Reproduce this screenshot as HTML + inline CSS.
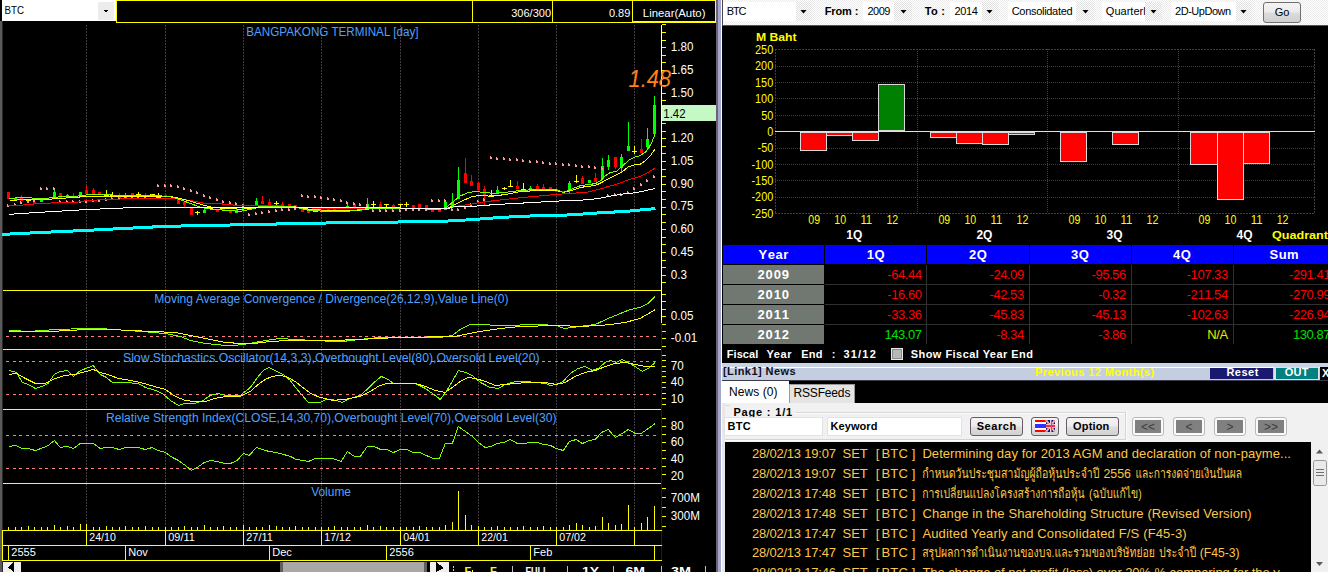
<!DOCTYPE html>
<html lang="th">
<head>
<meta charset="utf-8">
<title>BTC - BANGPAKONG TERMINAL</title>
<style>
html,body{margin:0;padding:0;background:#000;}
body{width:1328px;height:572px;overflow:hidden;position:relative;
 font-family:"Liberation Sans","Loma","Noto Sans Thai","Tahoma",Arial,sans-serif;}
#app{position:absolute;left:0;top:0;width:1328px;height:572px;overflow:hidden;background:#000;}
.t{position:absolute;white-space:nowrap;margin:0;padding:0;}
.b{position:absolute;margin:0;padding:0;display:block;}
.th{font-size:13px;}
table.grid{position:absolute;border-collapse:collapse;table-layout:fixed;font-size:13px;}
table.grid th,table.grid td{height:19px;padding:0;border:1px solid #000;box-sizing:border-box;line-height:15px;vertical-align:top;overflow:hidden;white-space:nowrap;font-kerning:none;}
table.grid tr{height:20px;}
table.grid tr.hd{height:20px;}
table.grid tr.hd th{background:#0000ff;color:#fff;font-weight:bold;text-align:center;letter-spacing:0.5px;height:20px;line-height:15px;padding-top:2px;}
table.grid th.yr{background:#717871;color:#fff;font-weight:bold;text-align:center;letter-spacing:0.8px;padding-top:2px;}
table.grid td{background:#000;text-align:right;padding:2px 5px 0 0;letter-spacing:-0.45px;border-color:#303030;}
td.neg{color:#ff0000;} td.pos{color:#00e000;} td.na{color:#e8e800;}
button{outline:none;}
</style>
</head>
<body>
<div id="app">
<svg id="tech" width="722" height="572" viewBox="0 0 722 572" shape-rendering="crispEdges" font-family="'Liberation Sans', Arial, sans-serif" style="position:absolute;left:0;top:0">
<rect x="0" y="0" width="722" height="572" fill="#000"/>
<rect x="0" y="21" width="2" height="551" fill="#5a5a5a"/>
<rect x="2" y="21" width="1" height="551" fill="#2a2a2a"/>
<line x1="86.5" y1="25" x2="86.5" y2="530" stroke="#443c44" stroke-width="1" stroke-dasharray="2 1"/>
<line x1="165.5" y1="25" x2="165.5" y2="530" stroke="#443c44" stroke-width="1" stroke-dasharray="2 1"/>
<line x1="243.5" y1="25" x2="243.5" y2="530" stroke="#443c44" stroke-width="1" stroke-dasharray="2 1"/>
<line x1="321.5" y1="25" x2="321.5" y2="530" stroke="#443c44" stroke-width="1" stroke-dasharray="2 1"/>
<line x1="400.5" y1="25" x2="400.5" y2="530" stroke="#443c44" stroke-width="1" stroke-dasharray="2 1"/>
<line x1="478.5" y1="25" x2="478.5" y2="530" stroke="#443c44" stroke-width="1" stroke-dasharray="2 1"/>
<line x1="556.5" y1="25" x2="556.5" y2="530" stroke="#443c44" stroke-width="1" stroke-dasharray="2 1"/>
<line x1="634.5" y1="25" x2="634.5" y2="530" stroke="#443c44" stroke-width="1" stroke-dasharray="2 1"/>
<rect x="3" y="290" width="658" height="1" fill="#ffff00"/>
<rect x="3" y="349" width="658" height="1" fill="#ffff00"/>
<rect x="3" y="409" width="658" height="1" fill="#ffff00"/>
<rect x="3" y="483" width="658" height="1" fill="#ffff00"/>
<rect x="2" y="0" width="114" height="21" fill="#fff"/>
<rect x="98" y="2" width="16" height="18" fill="#ececec"/>
<path d="M103.5 10 L108.5 10 L106 13 Z" fill="#000"/>
<text x="4.5" y="14.0" font-size="11" fill="#000" font-weight="normal" font-style="normal" text-anchor="start" textLength="19.5" lengthAdjust="spacingAndGlyphs">BTC</text>
<g fill="none" stroke="#ffff00" stroke-width="1">
<rect x="116.5" y="0.5" width="599" height="22"/>
<line x1="472.5" y1="0" x2="472.5" y2="22"/>
<line x1="552.5" y1="0" x2="552.5" y2="22"/>
<line x1="632.5" y1="0" x2="632.5" y2="22"/>
</g>
<rect x="633" y="21" width="82" height="1" fill="#e8e0e8"/>
<text x="551.0" y="16.6" font-size="11" fill="#fff" font-weight="normal" font-style="normal" text-anchor="end">306/300</text>
<text x="630.3" y="16.6" font-size="11" fill="#fff" font-weight="normal" font-style="normal" text-anchor="end">0.89</text>
<text x="642.8" y="17.0" font-size="11" fill="#fff" font-weight="normal" font-style="normal" text-anchor="start" textLength="62.7" lengthAdjust="spacingAndGlyphs">Linear(Auto)</text>
<text x="246.3" y="36.4" font-size="12" fill="#4fa0ff" font-weight="normal" font-style="normal" text-anchor="start" textLength="172.2" lengthAdjust="spacingAndGlyphs">BANGPAKONG TERMINAL [day]</text>
<text x="154.2" y="302.8" font-size="12" fill="#4fa0ff" font-weight="normal" font-style="normal" text-anchor="start" textLength="354.3" lengthAdjust="spacingAndGlyphs">Moving Average Convergence / Divergence(26,12,9),Value Line(0)</text>
<text x="123.0" y="361.6" font-size="12" fill="#4fa0ff" font-weight="normal" font-style="normal" text-anchor="start" textLength="416.5" lengthAdjust="spacingAndGlyphs">Slow Stochastics Oscillator(14,3,3),Overbought Level(80),Oversold Level(20)</text>
<text x="106.0" y="421.8" font-size="12" fill="#4fa0ff" font-weight="normal" font-style="normal" text-anchor="start" textLength="450.5" lengthAdjust="spacingAndGlyphs">Relative Strength Index(CLOSE,14,30,70),Overbought Level(70),Oversold Level(30)</text>
<text x="311.2" y="496.0" font-size="12" fill="#4fa0ff" font-weight="normal" font-style="normal" text-anchor="start" textLength="39.8" lengthAdjust="spacingAndGlyphs">Volume</text>
<line x1="6.3" y1="336.5" x2="656" y2="336.5" stroke="#ff8080" stroke-width="1" stroke-dasharray="3 3.529"/>
<line x1="6.3" y1="361.5" x2="656" y2="361.5" stroke="#ff8080" stroke-width="1" stroke-dasharray="3 3.529"/>
<line x1="6.3" y1="394.5" x2="656" y2="394.5" stroke="#ff8080" stroke-width="1" stroke-dasharray="3 3.529"/>
<line x1="6.3" y1="435.5" x2="656" y2="435.5" stroke="#ff8080" stroke-width="1" stroke-dasharray="3 3.529"/>
<line x1="6.3" y1="468.5" x2="656" y2="468.5" stroke="#ff8080" stroke-width="1" stroke-dasharray="3 3.529"/>
<rect x="7" y="192" width="3" height="7" fill="#ff0000"/>
<rect x="14" y="198" width="3" height="3" fill="#00ff00"/>
<rect x="20" y="198" width="3" height="3" fill="#ff0000"/>
<rect x="21" y="195" width="1" height="3" fill="#ff0000"/>
<rect x="28" y="199" width="1" height="0" fill="#ffff00"/>
<rect x="26" y="199" width="5" height="2" fill="#ffff00"/>
<rect x="33" y="202" width="3" height="2" fill="#ff0000"/>
<rect x="40" y="199" width="3" height="3" fill="#00ff00"/>
<rect x="46" y="198" width="3" height="2" fill="#00ff00"/>
<rect x="53" y="192" width="3" height="6" fill="#00ff00"/>
<rect x="54" y="190" width="1" height="2" fill="#00ff00"/>
<rect x="59" y="193" width="3" height="5" fill="#ff0000"/>
<rect x="66" y="195" width="3" height="3" fill="#00ff00"/>
<rect x="67" y="194" width="1" height="1" fill="#00ff00"/>
<rect x="72" y="196" width="3" height="2" fill="#ff0000"/>
<rect x="73" y="193" width="1" height="3" fill="#ff0000"/>
<rect x="79" y="192" width="3" height="5" fill="#00ff00"/>
<rect x="85" y="190" width="3" height="4" fill="#ff0000"/>
<rect x="86" y="186" width="1" height="4" fill="#ff0000"/>
<rect x="92" y="190" width="3" height="4" fill="#ff0000"/>
<rect x="93" y="188" width="1" height="2" fill="#ff0000"/>
<rect x="98" y="192" width="3" height="3" fill="#ff0000"/>
<rect x="106" y="190" width="1" height="4" fill="#ffff00"/>
<rect x="104" y="194" width="5" height="2" fill="#ffff00"/>
<rect x="112" y="192" width="1" height="3" fill="#ffff00"/>
<rect x="110" y="195" width="5" height="2" fill="#ffff00"/>
<rect x="118" y="195" width="3" height="3" fill="#ff0000"/>
<rect x="119" y="193" width="1" height="2" fill="#ff0000"/>
<rect x="124" y="195" width="3" height="3" fill="#00ff00"/>
<rect x="125" y="193" width="1" height="2" fill="#00ff00"/>
<rect x="131" y="193" width="3" height="3" fill="#ff0000"/>
<rect x="138" y="192" width="1" height="2" fill="#ffff00"/>
<rect x="136" y="194" width="5" height="2" fill="#ffff00"/>
<rect x="144" y="195" width="3" height="2" fill="#ff0000"/>
<rect x="145" y="193" width="1" height="2" fill="#ff0000"/>
<rect x="150" y="194" width="5" height="1" fill="#ffff00"/>
<rect x="152" y="194" width="1" height="2" fill="#ffff00"/>
<rect x="158" y="193" width="1" height="3" fill="#ffff00"/>
<rect x="156" y="196" width="5" height="2" fill="#ffff00"/>
<rect x="164" y="195" width="3" height="2" fill="#ff0000"/>
<rect x="177" y="198" width="3" height="6" fill="#ff0000"/>
<rect x="183" y="202" width="3" height="3" fill="#ff0000"/>
<rect x="184" y="205" width="1" height="3" fill="#ff0000"/>
<rect x="190" y="207" width="3" height="8" fill="#ff0000"/>
<rect x="197" y="211" width="1" height="4" fill="#ffff00"/>
<rect x="195" y="212" width="5" height="1" fill="#ffff00"/>
<rect x="203" y="210" width="3" height="3" fill="#00ff00"/>
<rect x="204" y="207" width="1" height="3" fill="#00ff00"/>
<rect x="208" y="208" width="5" height="1" fill="#ffff00"/>
<rect x="210" y="208" width="1" height="2" fill="#ffff00"/>
<rect x="216" y="209" width="3" height="3" fill="#ff0000"/>
<rect x="222" y="209" width="3" height="2" fill="#ff0000"/>
<rect x="229" y="210" width="3" height="3" fill="#ff0000"/>
<rect x="235" y="210" width="3" height="3" fill="#00ff00"/>
<rect x="236" y="208" width="1" height="2" fill="#00ff00"/>
<rect x="242" y="207" width="3" height="2" fill="#00ff00"/>
<rect x="243" y="204" width="1" height="3" fill="#00ff00"/>
<rect x="243" y="209" width="1" height="2" fill="#00ff00"/>
<rect x="255" y="201" width="3" height="4" fill="#00ff00"/>
<rect x="256" y="198" width="1" height="3" fill="#00ff00"/>
<rect x="261" y="201" width="3" height="3" fill="#ff0000"/>
<rect x="262" y="196" width="1" height="5" fill="#ff0000"/>
<rect x="268" y="202" width="3" height="3" fill="#ff0000"/>
<rect x="269" y="199" width="1" height="3" fill="#ff0000"/>
<rect x="276" y="201" width="1" height="4" fill="#ffff00"/>
<rect x="274" y="203" width="5" height="1" fill="#ffff00"/>
<rect x="281" y="204" width="3" height="2" fill="#ff0000"/>
<rect x="282" y="202" width="1" height="2" fill="#ff0000"/>
<rect x="288" y="204" width="3" height="2" fill="#ff0000"/>
<rect x="294" y="205" width="3" height="3" fill="#ff0000"/>
<rect x="301" y="207" width="3" height="5" fill="#ff0000"/>
<rect x="307" y="210" width="3" height="3" fill="#ff0000"/>
<rect x="315" y="208" width="1" height="2" fill="#ffff00"/>
<rect x="313" y="210" width="5" height="2" fill="#ffff00"/>
<rect x="320" y="210" width="3" height="2" fill="#ff0000"/>
<rect x="327" y="208" width="3" height="2" fill="#ff0000"/>
<rect x="333" y="208" width="3" height="2" fill="#ff0000"/>
<rect x="346" y="206" width="3" height="3" fill="#00ff00"/>
<rect x="347" y="204" width="1" height="2" fill="#00ff00"/>
<rect x="353" y="204" width="3" height="4" fill="#ff0000"/>
<rect x="359" y="209" width="3" height="2" fill="#00ff00"/>
<rect x="366" y="204" width="3" height="4" fill="#00ff00"/>
<rect x="367" y="198" width="1" height="6" fill="#00ff00"/>
<rect x="373" y="201" width="1" height="6" fill="#ffff00"/>
<rect x="371" y="204" width="5" height="1" fill="#ffff00"/>
<rect x="379" y="204" width="3" height="4" fill="#ff0000"/>
<rect x="380" y="202" width="1" height="2" fill="#ff0000"/>
<rect x="384" y="204" width="5" height="1" fill="#ffff00"/>
<rect x="386" y="204" width="1" height="4" fill="#ffff00"/>
<rect x="392" y="205" width="3" height="3" fill="#ff0000"/>
<rect x="393" y="204" width="1" height="1" fill="#ff0000"/>
<rect x="398" y="204" width="5" height="1" fill="#ffff00"/>
<rect x="400" y="204" width="1" height="4" fill="#ffff00"/>
<rect x="406" y="202" width="1" height="5" fill="#ffff00"/>
<rect x="404" y="204" width="5" height="1" fill="#ffff00"/>
<rect x="412" y="205" width="3" height="4" fill="#ff0000"/>
<rect x="418" y="204" width="3" height="5" fill="#ff0000"/>
<rect x="419" y="204" width="1" height="0" fill="#ff0000"/>
<rect x="425" y="205" width="3" height="4" fill="#ff0000"/>
<rect x="431" y="210" width="3" height="2" fill="#ff0000"/>
<rect x="438" y="209" width="3" height="3" fill="#ff0000"/>
<rect x="444" y="202" width="3" height="8" fill="#00ff00"/>
<rect x="451" y="202" width="3" height="5" fill="#00ff00"/>
<rect x="452" y="193" width="1" height="9" fill="#00ff00"/>
<rect x="457" y="180" width="3" height="19" fill="#00ff00"/>
<rect x="458" y="167" width="1" height="13" fill="#00ff00"/>
<rect x="464" y="173" width="3" height="10" fill="#ff0000"/>
<rect x="465" y="158" width="1" height="15" fill="#ff0000"/>
<rect x="470" y="181" width="3" height="5" fill="#ff0000"/>
<rect x="471" y="175" width="1" height="6" fill="#ff0000"/>
<rect x="477" y="183" width="3" height="7" fill="#ff0000"/>
<rect x="478" y="182" width="1" height="1" fill="#ff0000"/>
<rect x="478" y="190" width="1" height="2" fill="#ff0000"/>
<rect x="483" y="189" width="3" height="7" fill="#ff0000"/>
<rect x="484" y="186" width="1" height="3" fill="#ff0000"/>
<rect x="484" y="196" width="1" height="9" fill="#ff0000"/>
<rect x="491" y="190" width="1" height="5" fill="#ffff00"/>
<rect x="489" y="195" width="5" height="2" fill="#ffff00"/>
<rect x="496" y="190" width="3" height="3" fill="#00ff00"/>
<rect x="497" y="186" width="1" height="4" fill="#00ff00"/>
<rect x="504" y="187" width="1" height="3" fill="#ffff00"/>
<rect x="502" y="188" width="5" height="1" fill="#ffff00"/>
<rect x="510" y="180" width="1" height="7" fill="#ffff00"/>
<rect x="508" y="186" width="5" height="1" fill="#ffff00"/>
<rect x="516" y="186" width="3" height="3" fill="#ff0000"/>
<rect x="517" y="181" width="1" height="5" fill="#ff0000"/>
<rect x="523" y="183" width="1" height="6" fill="#ffff00"/>
<rect x="521" y="189" width="5" height="2" fill="#ffff00"/>
<rect x="529" y="188" width="3" height="3" fill="#00ff00"/>
<rect x="530" y="186" width="1" height="2" fill="#00ff00"/>
<rect x="536" y="186" width="3" height="3" fill="#ff0000"/>
<rect x="537" y="184" width="1" height="2" fill="#ff0000"/>
<rect x="542" y="187" width="3" height="2" fill="#ff0000"/>
<rect x="543" y="184" width="1" height="3" fill="#ff0000"/>
<rect x="549" y="187" width="3" height="2" fill="#ff0000"/>
<rect x="555" y="189" width="3" height="3" fill="#ff0000"/>
<rect x="562" y="191" width="3" height="3" fill="#ff0000"/>
<rect x="568" y="183" width="3" height="7" fill="#00ff00"/>
<rect x="569" y="181" width="1" height="2" fill="#00ff00"/>
<rect x="569" y="190" width="1" height="3" fill="#00ff00"/>
<rect x="576" y="175" width="1" height="8" fill="#ffff00"/>
<rect x="574" y="181" width="5" height="1" fill="#ffff00"/>
<rect x="581" y="178" width="3" height="6" fill="#ff0000"/>
<rect x="582" y="176" width="1" height="2" fill="#ff0000"/>
<rect x="588" y="180" width="3" height="3" fill="#00ff00"/>
<rect x="594" y="178" width="3" height="4" fill="#ff0000"/>
<rect x="595" y="173" width="1" height="5" fill="#ff0000"/>
<rect x="601" y="166" width="3" height="13" fill="#00ff00"/>
<rect x="602" y="158" width="1" height="8" fill="#00ff00"/>
<rect x="607" y="160" width="3" height="7" fill="#00ff00"/>
<rect x="608" y="155" width="1" height="5" fill="#00ff00"/>
<rect x="608" y="167" width="1" height="3" fill="#00ff00"/>
<rect x="614" y="157" width="3" height="10" fill="#ff0000"/>
<rect x="615" y="167" width="1" height="2" fill="#ff0000"/>
<rect x="620" y="157" width="3" height="11" fill="#00ff00"/>
<rect x="621" y="154" width="1" height="3" fill="#00ff00"/>
<rect x="621" y="168" width="1" height="4" fill="#00ff00"/>
<rect x="627" y="146" width="3" height="5" fill="#00ff00"/>
<rect x="628" y="122" width="1" height="24" fill="#00ff00"/>
<rect x="634" y="146" width="1" height="8" fill="#ffff00"/>
<rect x="632" y="151" width="5" height="1" fill="#ffff00"/>
<rect x="640" y="149" width="3" height="4" fill="#ff0000"/>
<rect x="641" y="139" width="1" height="10" fill="#ff0000"/>
<rect x="646" y="139" width="3" height="8" fill="#00ff00"/>
<rect x="647" y="128" width="1" height="11" fill="#00ff00"/>
<rect x="647" y="147" width="1" height="3" fill="#00ff00"/>
<rect x="653" y="105" width="3" height="29" fill="#00ff00"/>
<rect x="654" y="96" width="1" height="9" fill="#00ff00"/>
<rect x="7" y="205" width="2" height="2" fill="#ff9898"/>
<rect x="7" y="204" width="1" height="1" fill="#ff9898"/>
<rect x="14" y="204" width="2" height="2" fill="#ff9898"/>
<rect x="14" y="203" width="1" height="1" fill="#ff9898"/>
<rect x="20" y="202" width="2" height="2" fill="#ff9898"/>
<rect x="20" y="201" width="1" height="1" fill="#ff9898"/>
<rect x="27" y="201" width="2" height="2" fill="#ff9898"/>
<rect x="27" y="200" width="1" height="1" fill="#ff9898"/>
<rect x="33" y="200" width="2" height="2" fill="#ff9898"/>
<rect x="33" y="199" width="1" height="1" fill="#ff9898"/>
<rect x="40" y="188" width="2" height="2" fill="#ff9898"/>
<rect x="40" y="187" width="1" height="1" fill="#ff9898"/>
<rect x="46" y="188" width="2" height="2" fill="#ff9898"/>
<rect x="46" y="187" width="1" height="1" fill="#ff9898"/>
<rect x="53" y="188" width="2" height="2" fill="#ff9898"/>
<rect x="53" y="187" width="1" height="1" fill="#ff9898"/>
<rect x="59" y="201" width="2" height="2" fill="#ff9898"/>
<rect x="59" y="200" width="1" height="1" fill="#ff9898"/>
<rect x="66" y="201" width="2" height="2" fill="#ff9898"/>
<rect x="66" y="200" width="1" height="1" fill="#ff9898"/>
<rect x="72" y="201" width="2" height="2" fill="#ff9898"/>
<rect x="72" y="200" width="1" height="1" fill="#ff9898"/>
<rect x="79" y="201" width="2" height="2" fill="#ff9898"/>
<rect x="79" y="200" width="1" height="1" fill="#ff9898"/>
<rect x="85" y="201" width="2" height="2" fill="#ff9898"/>
<rect x="85" y="200" width="1" height="1" fill="#ff9898"/>
<rect x="92" y="200" width="2" height="2" fill="#ff9898"/>
<rect x="92" y="199" width="1" height="1" fill="#ff9898"/>
<rect x="98" y="200" width="2" height="2" fill="#ff9898"/>
<rect x="98" y="199" width="1" height="1" fill="#ff9898"/>
<rect x="105" y="199" width="2" height="2" fill="#ff9898"/>
<rect x="105" y="198" width="1" height="1" fill="#ff9898"/>
<rect x="111" y="198" width="2" height="2" fill="#ff9898"/>
<rect x="111" y="197" width="1" height="1" fill="#ff9898"/>
<rect x="118" y="198" width="2" height="2" fill="#ff9898"/>
<rect x="118" y="197" width="1" height="1" fill="#ff9898"/>
<rect x="124" y="197" width="2" height="2" fill="#ff9898"/>
<rect x="124" y="196" width="1" height="1" fill="#ff9898"/>
<rect x="131" y="197" width="2" height="2" fill="#ff9898"/>
<rect x="131" y="196" width="1" height="1" fill="#ff9898"/>
<rect x="137" y="196" width="2" height="2" fill="#ff9898"/>
<rect x="137" y="195" width="1" height="1" fill="#ff9898"/>
<rect x="144" y="196" width="2" height="2" fill="#ff9898"/>
<rect x="144" y="195" width="1" height="1" fill="#ff9898"/>
<rect x="151" y="195" width="2" height="2" fill="#ff9898"/>
<rect x="151" y="194" width="1" height="1" fill="#ff9898"/>
<rect x="157" y="185" width="2" height="2" fill="#ff9898"/>
<rect x="157" y="184" width="1" height="1" fill="#ff9898"/>
<rect x="164" y="185" width="2" height="2" fill="#ff9898"/>
<rect x="164" y="184" width="1" height="1" fill="#ff9898"/>
<rect x="170" y="185" width="2" height="2" fill="#ff9898"/>
<rect x="170" y="184" width="1" height="1" fill="#ff9898"/>
<rect x="177" y="186" width="2" height="2" fill="#ff9898"/>
<rect x="177" y="185" width="1" height="1" fill="#ff9898"/>
<rect x="183" y="188" width="2" height="2" fill="#ff9898"/>
<rect x="183" y="187" width="1" height="1" fill="#ff9898"/>
<rect x="190" y="190" width="2" height="2" fill="#ff9898"/>
<rect x="190" y="189" width="1" height="1" fill="#ff9898"/>
<rect x="196" y="192" width="2" height="2" fill="#ff9898"/>
<rect x="196" y="191" width="1" height="1" fill="#ff9898"/>
<rect x="203" y="195" width="2" height="2" fill="#ff9898"/>
<rect x="203" y="194" width="1" height="1" fill="#ff9898"/>
<rect x="209" y="197" width="2" height="2" fill="#ff9898"/>
<rect x="209" y="196" width="1" height="1" fill="#ff9898"/>
<rect x="216" y="199" width="2" height="2" fill="#ff9898"/>
<rect x="216" y="198" width="1" height="1" fill="#ff9898"/>
<rect x="222" y="201" width="2" height="2" fill="#ff9898"/>
<rect x="222" y="200" width="1" height="1" fill="#ff9898"/>
<rect x="229" y="202" width="2" height="2" fill="#ff9898"/>
<rect x="229" y="201" width="1" height="1" fill="#ff9898"/>
<rect x="235" y="203" width="2" height="2" fill="#ff9898"/>
<rect x="235" y="202" width="1" height="1" fill="#ff9898"/>
<rect x="242" y="205" width="2" height="2" fill="#ff9898"/>
<rect x="242" y="204" width="1" height="1" fill="#ff9898"/>
<rect x="248" y="214" width="2" height="2" fill="#ff9898"/>
<rect x="248" y="213" width="1" height="1" fill="#ff9898"/>
<rect x="255" y="213" width="2" height="2" fill="#ff9898"/>
<rect x="255" y="212" width="1" height="1" fill="#ff9898"/>
<rect x="261" y="212" width="2" height="2" fill="#ff9898"/>
<rect x="261" y="211" width="1" height="1" fill="#ff9898"/>
<rect x="268" y="211" width="2" height="2" fill="#ff9898"/>
<rect x="268" y="210" width="1" height="1" fill="#ff9898"/>
<rect x="275" y="210" width="2" height="2" fill="#ff9898"/>
<rect x="275" y="209" width="1" height="1" fill="#ff9898"/>
<rect x="281" y="209" width="2" height="2" fill="#ff9898"/>
<rect x="281" y="208" width="1" height="1" fill="#ff9898"/>
<rect x="288" y="209" width="2" height="2" fill="#ff9898"/>
<rect x="288" y="208" width="1" height="1" fill="#ff9898"/>
<rect x="294" y="208" width="2" height="2" fill="#ff9898"/>
<rect x="294" y="207" width="1" height="1" fill="#ff9898"/>
<rect x="301" y="195" width="2" height="2" fill="#ff9898"/>
<rect x="301" y="194" width="1" height="1" fill="#ff9898"/>
<rect x="307" y="196" width="2" height="2" fill="#ff9898"/>
<rect x="307" y="195" width="1" height="1" fill="#ff9898"/>
<rect x="314" y="196" width="2" height="2" fill="#ff9898"/>
<rect x="314" y="195" width="1" height="1" fill="#ff9898"/>
<rect x="320" y="197" width="2" height="2" fill="#ff9898"/>
<rect x="320" y="196" width="1" height="1" fill="#ff9898"/>
<rect x="327" y="198" width="2" height="2" fill="#ff9898"/>
<rect x="327" y="197" width="1" height="1" fill="#ff9898"/>
<rect x="333" y="199" width="2" height="2" fill="#ff9898"/>
<rect x="333" y="198" width="1" height="1" fill="#ff9898"/>
<rect x="340" y="200" width="2" height="2" fill="#ff9898"/>
<rect x="340" y="199" width="1" height="1" fill="#ff9898"/>
<rect x="346" y="202" width="2" height="2" fill="#ff9898"/>
<rect x="346" y="201" width="1" height="1" fill="#ff9898"/>
<rect x="353" y="203" width="2" height="2" fill="#ff9898"/>
<rect x="353" y="202" width="1" height="1" fill="#ff9898"/>
<rect x="359" y="204" width="2" height="2" fill="#ff9898"/>
<rect x="359" y="203" width="1" height="1" fill="#ff9898"/>
<rect x="366" y="205" width="2" height="2" fill="#ff9898"/>
<rect x="366" y="204" width="1" height="1" fill="#ff9898"/>
<rect x="372" y="210" width="2" height="2" fill="#ff9898"/>
<rect x="372" y="209" width="1" height="1" fill="#ff9898"/>
<rect x="379" y="210" width="2" height="2" fill="#ff9898"/>
<rect x="379" y="209" width="1" height="1" fill="#ff9898"/>
<rect x="385" y="210" width="2" height="2" fill="#ff9898"/>
<rect x="385" y="209" width="1" height="1" fill="#ff9898"/>
<rect x="392" y="210" width="2" height="2" fill="#ff9898"/>
<rect x="392" y="209" width="1" height="1" fill="#ff9898"/>
<rect x="399" y="210" width="2" height="2" fill="#ff9898"/>
<rect x="399" y="209" width="1" height="1" fill="#ff9898"/>
<rect x="405" y="209" width="2" height="2" fill="#ff9898"/>
<rect x="405" y="208" width="1" height="1" fill="#ff9898"/>
<rect x="412" y="209" width="2" height="2" fill="#ff9898"/>
<rect x="412" y="208" width="1" height="1" fill="#ff9898"/>
<rect x="418" y="209" width="2" height="2" fill="#ff9898"/>
<rect x="418" y="208" width="1" height="1" fill="#ff9898"/>
<rect x="425" y="209" width="2" height="2" fill="#ff9898"/>
<rect x="425" y="208" width="1" height="1" fill="#ff9898"/>
<rect x="431" y="200" width="2" height="2" fill="#ff9898"/>
<rect x="431" y="199" width="1" height="1" fill="#ff9898"/>
<rect x="438" y="200" width="2" height="2" fill="#ff9898"/>
<rect x="438" y="199" width="1" height="1" fill="#ff9898"/>
<rect x="444" y="200" width="2" height="2" fill="#ff9898"/>
<rect x="444" y="199" width="1" height="1" fill="#ff9898"/>
<rect x="451" y="209" width="2" height="2" fill="#ff9898"/>
<rect x="451" y="208" width="1" height="1" fill="#ff9898"/>
<rect x="457" y="209" width="2" height="2" fill="#ff9898"/>
<rect x="457" y="208" width="1" height="1" fill="#ff9898"/>
<rect x="464" y="207" width="2" height="2" fill="#ff9898"/>
<rect x="464" y="206" width="1" height="1" fill="#ff9898"/>
<rect x="470" y="204" width="2" height="2" fill="#ff9898"/>
<rect x="470" y="203" width="1" height="1" fill="#ff9898"/>
<rect x="477" y="201" width="2" height="2" fill="#ff9898"/>
<rect x="477" y="200" width="1" height="1" fill="#ff9898"/>
<rect x="483" y="199" width="2" height="2" fill="#ff9898"/>
<rect x="483" y="198" width="1" height="1" fill="#ff9898"/>
<rect x="490" y="157" width="2" height="2" fill="#ff9898"/>
<rect x="490" y="156" width="1" height="1" fill="#ff9898"/>
<rect x="496" y="158" width="2" height="2" fill="#ff9898"/>
<rect x="496" y="157" width="1" height="1" fill="#ff9898"/>
<rect x="503" y="158" width="2" height="2" fill="#ff9898"/>
<rect x="503" y="157" width="1" height="1" fill="#ff9898"/>
<rect x="509" y="159" width="2" height="2" fill="#ff9898"/>
<rect x="509" y="158" width="1" height="1" fill="#ff9898"/>
<rect x="516" y="159" width="2" height="2" fill="#ff9898"/>
<rect x="516" y="158" width="1" height="1" fill="#ff9898"/>
<rect x="522" y="160" width="2" height="2" fill="#ff9898"/>
<rect x="522" y="159" width="1" height="1" fill="#ff9898"/>
<rect x="529" y="161" width="2" height="2" fill="#ff9898"/>
<rect x="529" y="160" width="1" height="1" fill="#ff9898"/>
<rect x="536" y="161" width="2" height="2" fill="#ff9898"/>
<rect x="536" y="160" width="1" height="1" fill="#ff9898"/>
<rect x="542" y="162" width="2" height="2" fill="#ff9898"/>
<rect x="542" y="161" width="1" height="1" fill="#ff9898"/>
<rect x="549" y="163" width="2" height="2" fill="#ff9898"/>
<rect x="549" y="162" width="1" height="1" fill="#ff9898"/>
<rect x="555" y="163" width="2" height="2" fill="#ff9898"/>
<rect x="555" y="162" width="1" height="1" fill="#ff9898"/>
<rect x="562" y="164" width="2" height="2" fill="#ff9898"/>
<rect x="562" y="163" width="1" height="1" fill="#ff9898"/>
<rect x="568" y="164" width="2" height="2" fill="#ff9898"/>
<rect x="568" y="163" width="1" height="1" fill="#ff9898"/>
<rect x="575" y="165" width="2" height="2" fill="#ff9898"/>
<rect x="575" y="164" width="1" height="1" fill="#ff9898"/>
<rect x="581" y="166" width="2" height="2" fill="#ff9898"/>
<rect x="581" y="165" width="1" height="1" fill="#ff9898"/>
<rect x="588" y="166" width="2" height="2" fill="#ff9898"/>
<rect x="588" y="165" width="1" height="1" fill="#ff9898"/>
<rect x="594" y="167" width="2" height="2" fill="#ff9898"/>
<rect x="594" y="166" width="1" height="1" fill="#ff9898"/>
<rect x="601" y="168" width="2" height="2" fill="#ff9898"/>
<rect x="601" y="167" width="1" height="1" fill="#ff9898"/>
<rect x="607" y="195" width="2" height="2" fill="#ff9898"/>
<rect x="607" y="194" width="1" height="1" fill="#ff9898"/>
<rect x="614" y="194" width="2" height="2" fill="#ff9898"/>
<rect x="614" y="193" width="1" height="1" fill="#ff9898"/>
<rect x="620" y="194" width="2" height="2" fill="#ff9898"/>
<rect x="620" y="193" width="1" height="1" fill="#ff9898"/>
<rect x="627" y="192" width="2" height="2" fill="#ff9898"/>
<rect x="627" y="191" width="1" height="1" fill="#ff9898"/>
<rect x="633" y="188" width="2" height="2" fill="#ff9898"/>
<rect x="633" y="187" width="1" height="1" fill="#ff9898"/>
<rect x="640" y="184" width="2" height="2" fill="#ff9898"/>
<rect x="640" y="183" width="1" height="1" fill="#ff9898"/>
<rect x="646" y="180" width="2" height="2" fill="#ff9898"/>
<rect x="646" y="179" width="1" height="1" fill="#ff9898"/>
<rect x="653" y="176" width="2" height="2" fill="#ff9898"/>
<rect x="653" y="175" width="1" height="1" fill="#ff9898"/>
<polyline points="2.3,234.4 40.3,232.5 86.3,230.4 125.3,228.4 166.3,226.3 210.3,225.4 260.3,224.4 310.3,223.2 360.3,222.6 410.3,221.8 440.3,221.4 458.3,220.5 477.3,219.2 487.3,218.4 513.3,216.7 537.3,215.7 560.3,215.4 580.3,214.2 593.3,213.2 625.3,211.4 655.5,208.6" fill="none" stroke="#00ffff" stroke-width="3"/>
<polyline points="8.3,205.6 18.3,205.4 40.3,203.5 60.3,202.6 75.3,202.5 86.3,200.6 100.3,199.8 125.3,198.8 166.3,198.4 178.3,198.5 190.3,200.5 205.3,203.4 220.3,203.8 235.3,205.2 250.3,205.3 268.3,205.4 285.3,206.2 300.3,207.5 321.3,208.4 360.3,208.6 400.3,208.2 440.3,208.4 452.3,207.5 460.3,205.5 470.3,204.4 480.3,202.4 486.3,201.6 520.3,197.7 556.3,194.4 580.3,192.7 586.3,192.4 594.3,190.4 602.4,188.5 608.3,186.4 616.4,184.3 622.3,182.2 629.3,179.4 636.3,177.6 641.5,175.7 647.1,173.1 651.3,170.3 654.8,168.3" fill="none" stroke="#ff0000" stroke-width="1"/>
<polyline points="10.3,200.2 30.3,199.6 50.3,199.2 56.3,198.4 75.3,197.6 82.3,196.6 100.3,196.4 125.3,196.2 150.3,196.6 166.3,196.4 172.3,196.8 180.3,198.5 190.3,201.2 200.3,204.2 212.3,207.4 225.3,208.4 240.3,209.2 252.3,208.6 260.3,207.2 270.3,206.4 290.3,206.2 300.3,207.6 310.3,209.4 324.3,210.2 345.3,210.8 356.3,210.4 372.3,208.6 440.3,208.8 447.3,208.4 455.3,204.5 463.3,200.4 472.3,196.5 480.3,195.4 490.3,196.2 505.3,194.6 520.3,191.6 540.3,190.4 556.3,190.4 563.3,192.3 572.3,190.4 580.3,187.4 588.4,186.4 595.4,185.4 601.3,182.7 608.3,178.7 615.3,175.2 622.3,171.7 628.3,166.9 634.5,164.8 640.1,164.4 645.3,160.6 650.3,155.7 654.8,149.4" fill="none" stroke="#ffff00" stroke-width="1"/>
<polyline points="9.3,198.2 14.3,198.2 18.3,197.2 45.3,198.8 52.3,197.2 75.3,196.4 82.3,195.2 98.3,194.4 125.3,195.6 160.3,195.8 172.3,197.2 180.3,199.8 190.3,203.4 200.3,207.2 212.3,209.4 225.3,210.2 240.3,211.4 250.3,209.4 258.3,206.8 268.3,206.4 288.3,206.2 298.3,207.8 308.3,210.2 322.3,211.2 345.3,211.6 354.3,210.4 366.3,208.8 380.3,208.4 440.3,209.2 446.3,207.4 452.3,202.5 459.3,196.5 467.3,192.8 476.3,191.4 484.3,192.6 495.3,193.4 505.3,192.4 520.3,190.4 540.3,189.4 556.3,189.6 563.3,192.4 570.3,189.6 580.3,185.7 588.4,184.6 595.4,183.6 601.3,180.1 605.2,175.9 610.3,172.4 616.4,171.4 622.3,166.2 628.3,160.6 634.5,157.1 640.1,155.7 645.3,152.2 648.5,148.4 652.3,141.4 654.8,134.4" fill="none" stroke="#80ff00" stroke-width="1"/>
<polyline points="9.3,214.3 40.3,212.3 86.3,209.6 125.3,207.9 166.3,207.4 200.3,207.4 326.3,207.4 436.3,208.3 448.3,208.4 455.3,206.4 475.3,206.4 480.3,205.4 494.3,204.8 500.3,204.1 514.3,203.8 520.3,203.1 527.3,202.9 532.3,202.2 546.3,201.9 552.3,201.2 573.3,200.6 586.3,199.8 599.3,198.4 608.3,196.4 622.3,194.1 636.3,192.7 645.7,190.6 654.8,188.5" fill="none" stroke="#ffffff" stroke-width="1"/>
<rect x="661" y="25" width="1" height="295" fill="#ffffff"/>
<rect x="661" y="320" width="1" height="3" fill="#ffff00"/>
<rect x="661" y="323" width="1" height="238" fill="#0000ff"/>
<rect x="662" y="24" width="4" height="1" fill="#ffff00"/>
<rect x="662" y="32" width="4" height="1" fill="#ffff00"/>
<rect x="662" y="40" width="4" height="1" fill="#ffff00"/>
<rect x="662" y="47" width="4" height="1" fill="#ffff00"/>
<rect x="662" y="55" width="4" height="1" fill="#ffff00"/>
<rect x="662" y="62" width="4" height="1" fill="#ffff00"/>
<rect x="662" y="70" width="4" height="1" fill="#ffff00"/>
<rect x="662" y="78" width="4" height="1" fill="#ffff00"/>
<rect x="662" y="85" width="4" height="1" fill="#ffff00"/>
<rect x="662" y="93" width="4" height="1" fill="#ffff00"/>
<rect x="662" y="100" width="4" height="1" fill="#ffff00"/>
<rect x="662" y="108" width="4" height="1" fill="#ffff00"/>
<rect x="662" y="115" width="4" height="1" fill="#ffff00"/>
<rect x="662" y="123" width="4" height="1" fill="#ffff00"/>
<rect x="662" y="131" width="4" height="1" fill="#ffff00"/>
<rect x="662" y="138" width="4" height="1" fill="#ffff00"/>
<rect x="662" y="146" width="4" height="1" fill="#ffff00"/>
<rect x="662" y="153" width="4" height="1" fill="#ffff00"/>
<rect x="662" y="161" width="4" height="1" fill="#ffff00"/>
<rect x="662" y="169" width="4" height="1" fill="#ffff00"/>
<rect x="662" y="176" width="4" height="1" fill="#ffff00"/>
<rect x="662" y="184" width="4" height="1" fill="#ffff00"/>
<rect x="662" y="191" width="4" height="1" fill="#ffff00"/>
<rect x="662" y="199" width="4" height="1" fill="#ffff00"/>
<rect x="662" y="207" width="4" height="1" fill="#ffff00"/>
<rect x="662" y="214" width="4" height="1" fill="#ffff00"/>
<rect x="662" y="222" width="4" height="1" fill="#ffff00"/>
<rect x="662" y="229" width="4" height="1" fill="#ffff00"/>
<rect x="662" y="237" width="4" height="1" fill="#ffff00"/>
<rect x="662" y="244" width="4" height="1" fill="#ffff00"/>
<rect x="662" y="252" width="4" height="1" fill="#ffff00"/>
<rect x="662" y="260" width="4" height="1" fill="#ffff00"/>
<rect x="662" y="267" width="4" height="1" fill="#ffff00"/>
<rect x="662" y="275" width="4" height="1" fill="#ffff00"/>
<rect x="662" y="282" width="4" height="1" fill="#ffff00"/>
<rect x="662" y="294" width="4" height="1" fill="#ffff00"/>
<rect x="662" y="301" width="4" height="1" fill="#ffff00"/>
<rect x="662" y="309" width="4" height="1" fill="#ffff00"/>
<rect x="662" y="316" width="4" height="1" fill="#ffff00"/>
<rect x="662" y="324" width="4" height="1" fill="#ffff00"/>
<rect x="662" y="331" width="4" height="1" fill="#ffff00"/>
<rect x="662" y="338" width="4" height="1" fill="#ffff00"/>
<rect x="662" y="346" width="4" height="1" fill="#ffff00"/>
<rect x="662" y="355" width="4" height="1" fill="#ffff00"/>
<rect x="662" y="360" width="4" height="1" fill="#ffff00"/>
<rect x="662" y="366" width="4" height="1" fill="#ffff00"/>
<rect x="662" y="371" width="4" height="1" fill="#ffff00"/>
<rect x="662" y="376" width="4" height="1" fill="#ffff00"/>
<rect x="662" y="382" width="4" height="1" fill="#ffff00"/>
<rect x="662" y="387" width="4" height="1" fill="#ffff00"/>
<rect x="662" y="393" width="4" height="1" fill="#ffff00"/>
<rect x="662" y="398" width="4" height="1" fill="#ffff00"/>
<rect x="662" y="404" width="4" height="1" fill="#ffff00"/>
<rect x="662" y="418" width="4" height="1" fill="#ffff00"/>
<rect x="662" y="426" width="4" height="1" fill="#ffff00"/>
<rect x="662" y="434" width="4" height="1" fill="#ffff00"/>
<rect x="662" y="442" width="4" height="1" fill="#ffff00"/>
<rect x="662" y="450" width="4" height="1" fill="#ffff00"/>
<rect x="662" y="458" width="4" height="1" fill="#ffff00"/>
<rect x="662" y="466" width="4" height="1" fill="#ffff00"/>
<rect x="662" y="474" width="4" height="1" fill="#ffff00"/>
<rect x="662" y="488" width="4" height="1" fill="#ffff00"/>
<rect x="662" y="497" width="4" height="1" fill="#ffff00"/>
<rect x="662" y="507" width="4" height="1" fill="#ffff00"/>
<rect x="662" y="516" width="4" height="1" fill="#ffff00"/>
<rect x="662" y="526" width="4" height="1" fill="#ffff00"/>
<rect x="662" y="105" width="54" height="16" fill="#c4f8c4"/>
<text x="663.3" y="117.6" font-size="12.3" fill="#000" font-weight="normal" font-style="normal" text-anchor="start" textLength="22.3" lengthAdjust="spacingAndGlyphs">1.42</text>
<text x="628.5" y="87.0" font-size="24" fill="#ff8020" font-weight="normal" font-style="italic" text-anchor="start" textLength="42.5" lengthAdjust="spacingAndGlyphs">1.48</text>
<text x="670.8" y="51.0" font-size="12.3" fill="#fff" font-weight="normal" font-style="normal" text-anchor="start" textLength="22.6" lengthAdjust="spacingAndGlyphs">1.80</text>
<text x="670.8" y="73.8" font-size="12.3" fill="#fff" font-weight="normal" font-style="normal" text-anchor="start" textLength="22.6" lengthAdjust="spacingAndGlyphs">1.65</text>
<text x="670.8" y="96.5" font-size="12.3" fill="#fff" font-weight="normal" font-style="normal" text-anchor="start" textLength="22.6" lengthAdjust="spacingAndGlyphs">1.50</text>
<text x="670.8" y="142.0" font-size="12.3" fill="#fff" font-weight="normal" font-style="normal" text-anchor="start" textLength="22.6" lengthAdjust="spacingAndGlyphs">1.20</text>
<text x="670.8" y="164.8" font-size="12.3" fill="#fff" font-weight="normal" font-style="normal" text-anchor="start" textLength="22.6" lengthAdjust="spacingAndGlyphs">1.05</text>
<text x="670.8" y="187.6" font-size="12.3" fill="#fff" font-weight="normal" font-style="normal" text-anchor="start" textLength="22.6" lengthAdjust="spacingAndGlyphs">0.90</text>
<text x="670.8" y="210.3" font-size="12.3" fill="#fff" font-weight="normal" font-style="normal" text-anchor="start" textLength="22.6" lengthAdjust="spacingAndGlyphs">0.75</text>
<text x="670.8" y="233.1" font-size="12.3" fill="#fff" font-weight="normal" font-style="normal" text-anchor="start" textLength="22.6" lengthAdjust="spacingAndGlyphs">0.60</text>
<text x="670.8" y="255.8" font-size="12.3" fill="#fff" font-weight="normal" font-style="normal" text-anchor="start" textLength="22.6" lengthAdjust="spacingAndGlyphs">0.45</text>
<text x="670.8" y="278.6" font-size="12.3" fill="#fff" font-weight="normal" font-style="normal" text-anchor="start" textLength="16.2" lengthAdjust="spacingAndGlyphs">0.3</text>
<text x="670.8" y="319.8" font-size="12.3" fill="#fff" font-weight="normal" font-style="normal" text-anchor="start" textLength="22.6" lengthAdjust="spacingAndGlyphs">0.05</text>
<text x="670.8" y="342.3" font-size="12.3" fill="#fff" font-weight="normal" font-style="normal" text-anchor="start" textLength="26.5" lengthAdjust="spacingAndGlyphs">-0.01</text>
<text x="670.8" y="369.8" font-size="12.3" fill="#fff" font-weight="normal" font-style="normal" text-anchor="start" textLength="12.9" lengthAdjust="spacingAndGlyphs">70</text>
<text x="670.8" y="386.1" font-size="12.3" fill="#fff" font-weight="normal" font-style="normal" text-anchor="start" textLength="12.9" lengthAdjust="spacingAndGlyphs">40</text>
<text x="670.8" y="402.6" font-size="12.3" fill="#fff" font-weight="normal" font-style="normal" text-anchor="start" textLength="12.9" lengthAdjust="spacingAndGlyphs">10</text>
<text x="670.8" y="429.7" font-size="12.3" fill="#fff" font-weight="normal" font-style="normal" text-anchor="start" textLength="12.9" lengthAdjust="spacingAndGlyphs">80</text>
<text x="670.8" y="445.8" font-size="12.3" fill="#fff" font-weight="normal" font-style="normal" text-anchor="start" textLength="12.9" lengthAdjust="spacingAndGlyphs">60</text>
<text x="670.8" y="463.3" font-size="12.3" fill="#fff" font-weight="normal" font-style="normal" text-anchor="start" textLength="12.9" lengthAdjust="spacingAndGlyphs">40</text>
<text x="670.8" y="479.6" font-size="12.3" fill="#fff" font-weight="normal" font-style="normal" text-anchor="start" textLength="12.9" lengthAdjust="spacingAndGlyphs">20</text>
<text x="670.8" y="501.6" font-size="12.3" fill="#fff" font-weight="normal" font-style="normal" text-anchor="start" textLength="29.1" lengthAdjust="spacingAndGlyphs">700M</text>
<text x="670.8" y="520.1" font-size="12.3" fill="#fff" font-weight="normal" font-style="normal" text-anchor="start" textLength="29.1" lengthAdjust="spacingAndGlyphs">300M</text>
<polyline points="9.3,330.5 30.3,331.4 55.3,329.5 86.3,328.5 100.3,328.5 140.3,331.4 165.3,333.5 180.3,336.4 190.3,340.4 205.3,343.4 225.3,345.4 235.3,345.3 250.3,343.4 265.3,340.5 280.3,338.5 295.3,339.5 332.3,341.4 342.3,341.5 360.3,339.4 380.3,337.4 440.3,337.4 452.3,335.4 460.3,329.4 470.3,324.5 480.3,324.5 500.3,325.5 540.3,324.5 556.3,325.5 564.3,328.5 580.3,326.4 595.3,324.5 608.3,318.4 620.3,313.5 630.3,309.5 640.3,307.4 648.3,303.4 655.3,296.4" fill="none" stroke="#80ff00" stroke-width="1"/>
<polyline points="9.3,331.2 50.3,331.5 86.3,329.5 110.3,329.5 150.3,331.4 175.3,332.5 195.3,336.4 210.3,339.4 225.3,342.4 240.3,343.5 255.3,343.4 270.3,341.5 290.3,340.4 332.3,340.5 360.3,339.4 400.3,337.4 440.3,336.8 455.3,336.4 465.3,334.4 480.3,331.4 500.3,328.5 520.3,326.5 556.3,325.5 580.3,326.4 600.3,325.5 610.3,324.5 625.3,322.4 640.3,318.4 655.3,309.5" fill="none" stroke="#ffff00" stroke-width="1"/>
<polyline points="9.3,370.5 16.3,372.4 22.3,382.4 28.3,384.4 35.3,388.4 42.3,386.5 48.3,383.4 54.3,374.4 60.3,371.5 67.3,370.5 73.3,376.4 80.3,370.5 86.3,368.4 93.3,365.5 100.3,374.4 106.3,377.4 112.3,382.4 125.3,382.5 138.3,383.5 145.3,387.4 155.3,390.4 162.3,393.4 170.3,400.4 178.3,405.4 185.3,403.4 195.3,403.4 203.3,400.4 210.3,395.4 218.3,393.4 225.3,395.5 240.3,395.4 250.3,387.5 258.3,376.4 263.3,370.5 269.3,367.5 277.3,371.5 283.3,374.5 290.3,380.5 296.3,388.4 302.3,395.4 308.3,402.4 320.3,402.4 326.3,399.5 332.3,399.4 342.3,402.4 350.3,398.4 360.3,395.4 368.3,388.4 375.3,381.4 381.3,376.5 388.3,379.4 393.3,383.4 415.3,383.5 425.3,388.4 432.3,393.4 440.3,399.5 446.3,391.4 452.3,381.4 458.3,370.5 465.3,372.4 472.3,375.4 480.3,382.4 490.3,387.5 498.3,388.4 505.3,384.5 515.3,381.5 525.3,381.5 545.3,383.4 550.3,385.4 556.3,384.5 563.3,381.4 570.3,373.4 578.3,368.4 585.3,366.5 592.3,370.4 598.3,368.4 605.3,362.4 610.3,360.5 616.3,362.5 622.3,359.5 628.3,362.5 636.3,367.4 642.3,371.4 648.3,368.5 655.3,362.4" fill="none" stroke="#80ff00" stroke-width="1"/>
<polyline points="9.3,374.4 16.3,373.4 25.3,378.4 35.3,383.4 45.3,383.5 55.3,378.4 65.3,375.4 75.3,374.4 86.3,371.4 93.3,369.5 100.3,372.4 110.3,375.4 118.3,378.4 130.3,380.4 140.3,382.4 150.3,385.4 165.3,389.4 175.3,396.4 185.3,400.5 195.3,401.5 205.3,401.4 215.3,398.4 225.3,396.5 240.3,396.4 250.3,391.4 258.3,384.4 265.3,379.4 272.3,376.4 280.3,375.4 288.3,377.4 296.3,382.4 305.3,389.4 312.3,394.4 320.3,397.4 332.3,400.4 345.3,399.4 360.3,396.4 370.3,391.4 378.3,386.4 386.3,383.5 400.3,383.5 415.3,383.5 425.3,386.4 435.3,390.5 445.3,392.4 452.3,387.4 460.3,381.4 468.3,377.5 475.3,378.4 485.3,381.5 495.3,385.4 505.3,384.5 515.3,383.4 530.3,382.4 545.3,382.5 556.3,384.4 565.3,382.4 575.3,376.4 585.3,372.4 595.3,370.5 605.3,366.5 615.3,363.4 625.3,362.5 635.3,364.4 645.3,366.4 655.3,366.5" fill="none" stroke="#ffff00" stroke-width="1"/>
<polyline points="9.3,446.4 16.3,445.5 22.3,448.5 28.3,448.5 35.3,450.5 41.3,448.4 48.3,445.5 54.3,440.5 60.3,447.4 67.3,446.4 73.3,448.5 80.3,443.5 93.3,443.5 100.3,448.5 106.3,447.5 112.3,447.5 119.3,449.5 125.3,447.5 138.3,447.5 145.3,449.5 152.3,447.5 158.3,450.5 165.3,452.5 172.3,457.4 178.3,460.4 185.3,465.4 191.3,470.5 197.3,467.4 204.3,462.5 210.3,460.5 217.3,461.4 224.3,463.5 230.3,463.5 237.3,460.4 243.3,453.4 249.3,455.5 256.3,447.5 262.3,449.5 269.3,451.5 276.3,452.4 283.3,454.4 290.3,456.4 296.3,459.5 302.3,460.4 308.3,461.5 315.3,458.5 332.3,458.5 341.3,461.5 347.3,451.5 354.3,456.4 360.3,456.4 367.3,446.5 374.3,446.5 380.3,449.4 387.3,449.5 393.3,452.5 400.3,449.5 407.3,449.5 413.3,452.5 420.3,452.5 426.3,455.5 433.3,458.5 439.3,458.5 445.3,443.5 452.3,443.5 458.3,426.5 465.3,431.4 472.3,436.4 478.3,442.4 485.3,447.5 491.3,446.4 497.3,443.5 504.3,442.4 510.3,439.5 517.3,443.5 523.3,443.5 530.3,442.5 537.3,442.5 543.3,444.4 550.3,445.4 556.3,448.5 563.3,450.5 569.3,441.5 576.3,439.5 582.3,443.5 589.3,440.5 595.3,439.5 601.3,432.5 608.3,429.5 615.3,437.5 622.3,433.4 628.3,429.5 635.3,433.4 641.3,433.4 648.3,428.5 655.3,423.5" fill="none" stroke="#80ff00" stroke-width="1"/>
<rect x="8" y="527" width="1" height="3" fill="#ffff00"/>
<rect x="15" y="527" width="1" height="3" fill="#ffff00"/>
<rect x="21" y="527" width="1" height="3" fill="#ffff00"/>
<rect x="28" y="526" width="1" height="4" fill="#ffff00"/>
<rect x="34" y="527" width="1" height="3" fill="#ffff00"/>
<rect x="41" y="527" width="1" height="3" fill="#ffff00"/>
<rect x="47" y="527" width="1" height="3" fill="#ffff00"/>
<rect x="54" y="525" width="1" height="5" fill="#ffff00"/>
<rect x="60" y="527" width="1" height="3" fill="#ffff00"/>
<rect x="67" y="526" width="1" height="4" fill="#ffff00"/>
<rect x="73" y="527" width="1" height="3" fill="#ffff00"/>
<rect x="80" y="524" width="1" height="6" fill="#ffff00"/>
<rect x="86" y="524" width="1" height="6" fill="#ffff00"/>
<rect x="93" y="527" width="1" height="3" fill="#ffff00"/>
<rect x="99" y="527" width="1" height="3" fill="#ffff00"/>
<rect x="106" y="526" width="1" height="4" fill="#ffff00"/>
<rect x="112" y="527" width="1" height="3" fill="#ffff00"/>
<rect x="119" y="527" width="1" height="3" fill="#ffff00"/>
<rect x="125" y="526" width="1" height="4" fill="#ffff00"/>
<rect x="132" y="527" width="1" height="3" fill="#ffff00"/>
<rect x="138" y="527" width="1" height="3" fill="#ffff00"/>
<rect x="145" y="526" width="1" height="4" fill="#ffff00"/>
<rect x="152" y="527" width="1" height="3" fill="#ffff00"/>
<rect x="158" y="527" width="1" height="3" fill="#ffff00"/>
<rect x="165" y="527" width="1" height="3" fill="#ffff00"/>
<rect x="171" y="527" width="1" height="3" fill="#ffff00"/>
<rect x="178" y="527" width="1" height="3" fill="#ffff00"/>
<rect x="184" y="526" width="1" height="4" fill="#ffff00"/>
<rect x="191" y="527" width="1" height="3" fill="#ffff00"/>
<rect x="197" y="527" width="1" height="3" fill="#ffff00"/>
<rect x="204" y="525" width="1" height="5" fill="#ffff00"/>
<rect x="210" y="527" width="1" height="3" fill="#ffff00"/>
<rect x="217" y="527" width="1" height="3" fill="#ffff00"/>
<rect x="223" y="526" width="1" height="4" fill="#ffff00"/>
<rect x="230" y="527" width="1" height="3" fill="#ffff00"/>
<rect x="236" y="527" width="1" height="3" fill="#ffff00"/>
<rect x="243" y="525" width="1" height="5" fill="#ffff00"/>
<rect x="249" y="527" width="1" height="3" fill="#ffff00"/>
<rect x="256" y="527" width="1" height="3" fill="#ffff00"/>
<rect x="262" y="527" width="1" height="3" fill="#ffff00"/>
<rect x="269" y="525" width="1" height="5" fill="#ffff00"/>
<rect x="276" y="526" width="1" height="4" fill="#ffff00"/>
<rect x="282" y="527" width="1" height="3" fill="#ffff00"/>
<rect x="289" y="527" width="1" height="3" fill="#ffff00"/>
<rect x="295" y="526" width="1" height="4" fill="#ffff00"/>
<rect x="302" y="527" width="1" height="3" fill="#ffff00"/>
<rect x="308" y="527" width="1" height="3" fill="#ffff00"/>
<rect x="315" y="527" width="1" height="3" fill="#ffff00"/>
<rect x="321" y="527" width="1" height="3" fill="#ffff00"/>
<rect x="328" y="527" width="1" height="3" fill="#ffff00"/>
<rect x="334" y="526" width="1" height="4" fill="#ffff00"/>
<rect x="341" y="527" width="1" height="3" fill="#ffff00"/>
<rect x="347" y="527" width="1" height="3" fill="#ffff00"/>
<rect x="354" y="527" width="1" height="3" fill="#ffff00"/>
<rect x="360" y="527" width="1" height="3" fill="#ffff00"/>
<rect x="367" y="525" width="1" height="5" fill="#ffff00"/>
<rect x="373" y="527" width="1" height="3" fill="#ffff00"/>
<rect x="380" y="526" width="1" height="4" fill="#ffff00"/>
<rect x="386" y="527" width="1" height="3" fill="#ffff00"/>
<rect x="393" y="527" width="1" height="3" fill="#ffff00"/>
<rect x="400" y="527" width="1" height="3" fill="#ffff00"/>
<rect x="406" y="527" width="1" height="3" fill="#ffff00"/>
<rect x="413" y="527" width="1" height="3" fill="#ffff00"/>
<rect x="419" y="526" width="1" height="4" fill="#ffff00"/>
<rect x="426" y="527" width="1" height="3" fill="#ffff00"/>
<rect x="432" y="527" width="1" height="3" fill="#ffff00"/>
<rect x="439" y="527" width="1" height="3" fill="#ffff00"/>
<rect x="445" y="525" width="1" height="5" fill="#ffff00"/>
<rect x="452" y="522" width="1" height="8" fill="#ffff00"/>
<rect x="458" y="491" width="1" height="39" fill="#ffff00"/>
<rect x="465" y="515" width="1" height="15" fill="#ffff00"/>
<rect x="471" y="525" width="1" height="5" fill="#ffff00"/>
<rect x="478" y="526" width="1" height="4" fill="#ffff00"/>
<rect x="484" y="527" width="1" height="3" fill="#ffff00"/>
<rect x="491" y="527" width="1" height="3" fill="#ffff00"/>
<rect x="497" y="526" width="1" height="4" fill="#ffff00"/>
<rect x="504" y="527" width="1" height="3" fill="#ffff00"/>
<rect x="510" y="527" width="1" height="3" fill="#ffff00"/>
<rect x="517" y="527" width="1" height="3" fill="#ffff00"/>
<rect x="523" y="526" width="1" height="4" fill="#ffff00"/>
<rect x="530" y="527" width="1" height="3" fill="#ffff00"/>
<rect x="537" y="527" width="1" height="3" fill="#ffff00"/>
<rect x="543" y="526" width="1" height="4" fill="#ffff00"/>
<rect x="550" y="527" width="1" height="3" fill="#ffff00"/>
<rect x="556" y="527" width="1" height="3" fill="#ffff00"/>
<rect x="563" y="527" width="1" height="3" fill="#ffff00"/>
<rect x="569" y="525" width="1" height="5" fill="#ffff00"/>
<rect x="576" y="523" width="1" height="7" fill="#ffff00"/>
<rect x="582" y="525" width="1" height="5" fill="#ffff00"/>
<rect x="589" y="527" width="1" height="3" fill="#ffff00"/>
<rect x="595" y="526" width="1" height="4" fill="#ffff00"/>
<rect x="602" y="517" width="1" height="13" fill="#ffff00"/>
<rect x="608" y="523" width="1" height="7" fill="#ffff00"/>
<rect x="615" y="525" width="1" height="5" fill="#ffff00"/>
<rect x="621" y="524" width="1" height="6" fill="#ffff00"/>
<rect x="628" y="505" width="1" height="25" fill="#ffff00"/>
<rect x="634" y="527" width="1" height="3" fill="#ffff00"/>
<rect x="641" y="523" width="1" height="7" fill="#ffff00"/>
<rect x="647" y="517" width="1" height="13" fill="#ffff00"/>
<rect x="654" y="506" width="1" height="24" fill="#ffff00"/>
<rect x="3" y="530" width="659" height="1" fill="#ffff00"/>
<rect x="3" y="545" width="659" height="1" fill="#ffff00"/>
<rect x="3" y="560" width="659" height="1" fill="#ffff00"/>
<rect x="2" y="530" width="1" height="31" fill="#ffff00"/>
<rect x="86" y="530" width="1" height="15" fill="#ffff00"/>
<text x="89.3" y="540.9" font-size="11.3" fill="#fff" font-weight="normal" font-style="normal" text-anchor="start" textLength="26.5" lengthAdjust="spacingAndGlyphs">24/10</text>
<rect x="165" y="530" width="1" height="15" fill="#ffff00"/>
<text x="168.3" y="540.9" font-size="11.3" fill="#fff" font-weight="normal" font-style="normal" text-anchor="start" textLength="26.5" lengthAdjust="spacingAndGlyphs">09/11</text>
<rect x="243" y="530" width="1" height="15" fill="#ffff00"/>
<text x="246.3" y="540.9" font-size="11.3" fill="#fff" font-weight="normal" font-style="normal" text-anchor="start" textLength="26.5" lengthAdjust="spacingAndGlyphs">27/11</text>
<rect x="321" y="530" width="1" height="15" fill="#ffff00"/>
<text x="324.3" y="540.9" font-size="11.3" fill="#fff" font-weight="normal" font-style="normal" text-anchor="start" textLength="26.5" lengthAdjust="spacingAndGlyphs">17/12</text>
<rect x="400" y="530" width="1" height="15" fill="#ffff00"/>
<text x="403.3" y="540.9" font-size="11.3" fill="#fff" font-weight="normal" font-style="normal" text-anchor="start" textLength="26.5" lengthAdjust="spacingAndGlyphs">04/01</text>
<rect x="478" y="530" width="1" height="15" fill="#ffff00"/>
<text x="481.3" y="540.9" font-size="11.3" fill="#fff" font-weight="normal" font-style="normal" text-anchor="start" textLength="26.5" lengthAdjust="spacingAndGlyphs">22/01</text>
<rect x="556" y="530" width="1" height="15" fill="#ffff00"/>
<text x="559.3" y="540.9" font-size="11.3" fill="#fff" font-weight="normal" font-style="normal" text-anchor="start" textLength="26.5" lengthAdjust="spacingAndGlyphs">07/02</text>
<rect x="634" y="530" width="1" height="15" fill="#ffff00"/>
<rect x="8" y="545" width="1" height="15" fill="#ffff00"/>
<text x="11.3" y="556.3" font-size="11" fill="#fff" font-weight="normal" font-style="normal" text-anchor="start">2555</text>
<rect x="125" y="545" width="1" height="15" fill="#ffff00"/>
<text x="128.3" y="556.3" font-size="11" fill="#fff" font-weight="normal" font-style="normal" text-anchor="start">Nov</text>
<rect x="269" y="545" width="1" height="15" fill="#ffff00"/>
<text x="272.3" y="556.3" font-size="11" fill="#fff" font-weight="normal" font-style="normal" text-anchor="start">Dec</text>
<rect x="386" y="545" width="1" height="15" fill="#ffff00"/>
<text x="389.3" y="556.3" font-size="11" fill="#fff" font-weight="normal" font-style="normal" text-anchor="start">2556</text>
<rect x="530" y="545" width="1" height="15" fill="#ffff00"/>
<text x="533.3" y="556.3" font-size="11" fill="#fff" font-weight="normal" font-style="normal" text-anchor="start">Feb</text>
<rect x="654" y="545" width="1" height="15" fill="#ffff00"/>
<rect x="3" y="562" width="18" height="10" fill="#f0f0f0"/>
<path d="M14 562 L14 572 L8 567.5 Z" fill="#000"/>
<rect x="280" y="562" width="146" height="10" fill="#a8a8a8"/>
<rect x="280" y="562" width="3" height="10" fill="#606060"/>
<rect x="424" y="562" width="3" height="10" fill="#606060"/>
<rect x="430" y="562" width="19" height="10" fill="#f0f0f0"/>
<path d="M436 562 L436 572 L444 568 Z" fill="#000"/>
<rect x="453" y="566" width="1" height="2" fill="#d0d0d0"/>
<rect x="453" y="569" width="1" height="2" fill="#d0d0d0"/>
<text x="464.5" y="574.7" font-size="11" fill="#ffff00" font-weight="bold" font-style="normal" text-anchor="start">F</text>
<rect x="472" y="570" width="1" height="2" fill="#ffff00"/>
<text x="490.0" y="574.7" font-size="11" fill="#ffff00" font-weight="bold" font-style="normal" text-anchor="start">F</text>
<rect x="512" y="566" width="1" height="6" fill="#c0c0c0"/>
<rect x="567" y="566" width="1" height="6" fill="#c0c0c0"/>
<rect x="613" y="566" width="1" height="6" fill="#c0c0c0"/>
<rect x="661" y="566" width="1" height="6" fill="#c0c0c0"/>
<rect x="705" y="566" width="1" height="6" fill="#c0c0c0"/>
<text x="525.5" y="574.7" font-size="11" fill="#fff" font-weight="bold" font-style="normal" text-anchor="start" textLength="23.0" lengthAdjust="spacingAndGlyphs">FULL</text>
<text x="582.0" y="574.7" font-size="11" fill="#fff" font-weight="bold" font-style="normal" text-anchor="start" textLength="17.0" lengthAdjust="spacingAndGlyphs">1Y</text>
<text x="625.5" y="574.7" font-size="11" fill="#fff" font-weight="bold" font-style="normal" text-anchor="start" textLength="19.5" lengthAdjust="spacingAndGlyphs">6M</text>
<text x="671.0" y="574.7" font-size="11" fill="#fff" font-weight="bold" font-style="normal" text-anchor="start" textLength="20.0" lengthAdjust="spacingAndGlyphs">3M</text>
<rect x="716" y="0" width="2" height="572" fill="#706070"/>
<rect x="718" y="0" width="3" height="572" fill="#a0a8d0"/>
<rect x="721" y="0" width="1" height="572" fill="#ffffff"/>
</svg>
<div class="b " style="left:722px;top:0px;width:606px;height:25px;background:#f4f4f4 repeating-conic-gradient(#ffffff 0% 25%, #ebebeb 0% 50%) 0 0/2px 2px;"></div>
<div class="b " style="left:722px;top:0px;width:1px;height:26px;background:#504050;"></div>
<div class="b " style="left:722px;top:25px;width:606px;height:1px;background:#5a4a5a;"></div>
<div class="b combo" style="left:723px;top:2px;width:73px;height:19px;background:#fff;overflow:hidden;"></div>
<div class="b " style="left:796px;top:2px;width:16px;height:19px;background:#ececec repeating-conic-gradient(#ffffff 0% 25%, #dedede 0% 50%) 0 0/2px 2px;"><svg width="7" height="4" viewBox="0 0 7 4" style="position:absolute;left:4px;top:8px"><path d="M0.5 0 L6.5 0 L3.5 3.5 Z" fill="#000"/></svg></div>
<div class="b" style="left:723px;top:2px;width:73px;height:19px;overflow:hidden">
<div class="t" style="left:3.8px;top:2.29px;font-size:11px;line-height:15px;color:#000;letter-spacing:-1.167px;">BTC</div></div>
<div class="t " style="left:824.7px;top:3.89px;font-size:11px;line-height:15px;color:#000;font-weight:bold;letter-spacing:-0.103px;">From :</div>
<div class="b combo" style="left:863px;top:2px;width:31px;height:19px;background:#fff;overflow:hidden;"></div>
<div class="b " style="left:894px;top:2px;width:18px;height:19px;background:#ececec repeating-conic-gradient(#ffffff 0% 25%, #dedede 0% 50%) 0 0/2px 2px;"><svg width="7" height="4" viewBox="0 0 7 4" style="position:absolute;left:6px;top:8px"><path d="M0.5 0 L6.5 0 L3.5 3.5 Z" fill="#000"/></svg></div>
<div class="b" style="left:863px;top:2px;width:31px;height:19px;overflow:hidden">
<div class="t" style="left:4.4px;top:2.29px;font-size:11px;line-height:15px;color:#000;letter-spacing:-0.475px;">2009</div></div>
<div class="t " style="left:924.8px;top:3.89px;font-size:11px;line-height:15px;color:#000;font-weight:bold;letter-spacing:0.264px;">To :</div>
<div class="b combo" style="left:950px;top:2px;width:32px;height:19px;background:#fff;overflow:hidden;"></div>
<div class="b " style="left:982px;top:2px;width:16px;height:19px;background:#ececec repeating-conic-gradient(#ffffff 0% 25%, #dedede 0% 50%) 0 0/2px 2px;"><svg width="7" height="4" viewBox="0 0 7 4" style="position:absolute;left:4px;top:8px"><path d="M0.5 0 L6.5 0 L3.5 3.5 Z" fill="#000"/></svg></div>
<div class="b" style="left:950px;top:2px;width:32px;height:19px;overflow:hidden">
<div class="t" style="left:4.5px;top:2.29px;font-size:11px;line-height:15px;color:#000;letter-spacing:-0.350px;">2014</div></div>
<div class="b combo" style="left:1008px;top:2px;width:68px;height:19px;background:#fff;overflow:hidden;"></div>
<div class="b " style="left:1076px;top:2px;width:18px;height:19px;background:#ececec repeating-conic-gradient(#ffffff 0% 25%, #dedede 0% 50%) 0 0/2px 2px;"><svg width="7" height="4" viewBox="0 0 7 4" style="position:absolute;left:6px;top:8px"><path d="M0.5 0 L6.5 0 L3.5 3.5 Z" fill="#000"/></svg></div>
<div class="b" style="left:1008px;top:2px;width:68px;height:19px;overflow:hidden">
<div class="t" style="left:3.7px;top:2.29px;font-size:11px;line-height:15px;color:#000;letter-spacing:-0.296px;">Consolidated</div></div>
<div class="b combo" style="left:1102px;top:2px;width:43px;height:19px;background:#fff;overflow:hidden;"></div>
<div class="b " style="left:1145px;top:2px;width:17px;height:19px;background:#ececec repeating-conic-gradient(#ffffff 0% 25%, #dedede 0% 50%) 0 0/2px 2px;"><svg width="7" height="4" viewBox="0 0 7 4" style="position:absolute;left:5px;top:8px"><path d="M0.5 0 L6.5 0 L3.5 3.5 Z" fill="#000"/></svg></div>
<div class="b" style="left:1102px;top:2px;width:43px;height:19px;overflow:hidden">
<div class="t" style="left:3.8px;top:2.29px;font-size:11px;line-height:15px;color:#000;letter-spacing:0.028px;">Quarterly</div></div>
<div class="b combo" style="left:1171px;top:2px;width:65px;height:19px;background:#fff;overflow:hidden;"></div>
<div class="b " style="left:1236px;top:2px;width:16px;height:19px;background:#ececec repeating-conic-gradient(#ffffff 0% 25%, #dedede 0% 50%) 0 0/2px 2px;"><svg width="7" height="4" viewBox="0 0 7 4" style="position:absolute;left:4px;top:8px"><path d="M0.5 0 L6.5 0 L3.5 3.5 Z" fill="#000"/></svg></div>
<div class="b" style="left:1171px;top:2px;width:65px;height:19px;overflow:hidden">
<div class="t" style="left:4.0px;top:2.29px;font-size:11px;line-height:15px;color:#000;letter-spacing:-0.467px;">2D-UpDown</div></div>
<button class="b " style="left:1263px;top:2px;width:38px;height:21px;border:1px solid #707070;border-radius:3px;box-sizing:border-box;background:linear-gradient(#f4f4f4 0%,#ebebeb 48%,#dcdcdc 52%,#cfcfcf 100%);font-size:11px;line-height:19px;text-align:center;color:#000;padding:0;font-family:inherit">Go</button>
<svg width="606" height="219" viewBox="722 26 606 219" shape-rendering="crispEdges" font-family="'Liberation Sans', Arial, sans-serif" style="position:absolute;left:722px;top:26px">
<rect x="722" y="26" width="606" height="219" fill="#000"/>
<line x1="775" y1="213.5" x2="1314" y2="213.5" stroke="#443c44" stroke-dasharray="2 1"/>
<text x="773.2" y="217.8" font-size="12.3" fill="#ffff00" text-anchor="end" textLength="21.7" lengthAdjust="spacingAndGlyphs">-250</text>
<line x1="775" y1="197.5" x2="1314" y2="197.5" stroke="#443c44" stroke-dasharray="1 1"/>
<text x="773.2" y="201.4" font-size="12.3" fill="#ffff00" text-anchor="end" textLength="21.7" lengthAdjust="spacingAndGlyphs">-200</text>
<line x1="775" y1="180.5" x2="1314" y2="180.5" stroke="#443c44" stroke-dasharray="1 1"/>
<text x="773.2" y="185.0" font-size="12.3" fill="#ffff00" text-anchor="end" textLength="21.7" lengthAdjust="spacingAndGlyphs">-150</text>
<line x1="775" y1="164.5" x2="1314" y2="164.5" stroke="#443c44" stroke-dasharray="1 1"/>
<text x="773.2" y="168.7" font-size="12.3" fill="#ffff00" text-anchor="end" textLength="21.7" lengthAdjust="spacingAndGlyphs">-100</text>
<line x1="775" y1="148.5" x2="1314" y2="148.5" stroke="#443c44" stroke-dasharray="1 1"/>
<text x="773.2" y="152.3" font-size="12.3" fill="#ffff00" text-anchor="end" textLength="15.6" lengthAdjust="spacingAndGlyphs">-50</text>
<text x="773.2" y="135.9" font-size="12.3" fill="#ffff00" text-anchor="end" textLength="6.0" lengthAdjust="spacingAndGlyphs">0</text>
<line x1="775" y1="115.5" x2="1314" y2="115.5" stroke="#443c44" stroke-dasharray="1 1"/>
<text x="773.2" y="119.5" font-size="12.3" fill="#ffff00" text-anchor="end" textLength="12.0" lengthAdjust="spacingAndGlyphs">50</text>
<line x1="775" y1="98.5" x2="1314" y2="98.5" stroke="#443c44" stroke-dasharray="1 1"/>
<text x="773.2" y="103.1" font-size="12.3" fill="#ffff00" text-anchor="end" textLength="18.1" lengthAdjust="spacingAndGlyphs">100</text>
<line x1="775" y1="82.5" x2="1314" y2="82.5" stroke="#443c44" stroke-dasharray="1 1"/>
<text x="773.2" y="86.8" font-size="12.3" fill="#ffff00" text-anchor="end" textLength="18.1" lengthAdjust="spacingAndGlyphs">150</text>
<line x1="775" y1="66.5" x2="1314" y2="66.5" stroke="#443c44" stroke-dasharray="1 1"/>
<text x="773.2" y="70.4" font-size="12.3" fill="#ffff00" text-anchor="end" textLength="18.1" lengthAdjust="spacingAndGlyphs">200</text>
<line x1="775" y1="49.5" x2="1314" y2="49.5" stroke="#443c44" stroke-dasharray="2 1"/>
<text x="773.2" y="54.0" font-size="12.3" fill="#ffff00" text-anchor="end" textLength="18.1" lengthAdjust="spacingAndGlyphs">250</text>
<line x1="775.5" y1="49" x2="775.5" y2="213" stroke="#443c44" stroke-dasharray="2 1"/>
<line x1="917.5" y1="49" x2="917.5" y2="213" stroke="#443c44" stroke-dasharray="1 1"/>
<line x1="1047.5" y1="49" x2="1047.5" y2="213" stroke="#443c44" stroke-dasharray="1 1"/>
<line x1="1178.5" y1="49" x2="1178.5" y2="213" stroke="#443c44" stroke-dasharray="1 1"/>
<line x1="1314.5" y1="49" x2="1314.5" y2="213" stroke="#443c44" stroke-dasharray="2 1"/>
<text x="814.2" y="223.9" font-size="12.3" fill="#ffff00" text-anchor="middle" textLength="11.8" lengthAdjust="spacingAndGlyphs">09</text>
<rect x="800.5" y="132.5" width="26" height="18" fill="#ff0000" stroke="#d8d8d8" stroke-width="1"/>
<text x="840.2" y="223.9" font-size="12.3" fill="#ffff00" text-anchor="middle" textLength="11.8" lengthAdjust="spacingAndGlyphs">10</text>
<rect x="826.5" y="132.5" width="26" height="3" fill="#ff0000" stroke="#d8d8d8" stroke-width="1"/>
<text x="866.3" y="223.9" font-size="12.3" fill="#ffff00" text-anchor="middle" textLength="11.8" lengthAdjust="spacingAndGlyphs">11</text>
<rect x="852.5" y="132.5" width="26" height="8" fill="#ff0000" stroke="#d8d8d8" stroke-width="1"/>
<text x="892.3" y="223.9" font-size="12.3" fill="#ffff00" text-anchor="middle" textLength="11.8" lengthAdjust="spacingAndGlyphs">12</text>
<rect x="878.5" y="84.5" width="26" height="46" fill="#008000" stroke="#d8d8d8" stroke-width="1"/>
<text x="854.3" y="238.6" font-size="12" font-weight="bold" fill="#fff" text-anchor="middle">1Q</text>
<text x="944.3" y="223.9" font-size="12.3" fill="#ffff00" text-anchor="middle" textLength="11.8" lengthAdjust="spacingAndGlyphs">09</text>
<rect x="930.5" y="132.5" width="26" height="5" fill="#ff0000" stroke="#d8d8d8" stroke-width="1"/>
<text x="970.3" y="223.9" font-size="12.3" fill="#ffff00" text-anchor="middle" textLength="11.8" lengthAdjust="spacingAndGlyphs">10</text>
<rect x="956.5" y="132.5" width="26" height="11" fill="#ff0000" stroke="#d8d8d8" stroke-width="1"/>
<text x="996.4" y="223.9" font-size="12.3" fill="#ffff00" text-anchor="middle" textLength="11.8" lengthAdjust="spacingAndGlyphs">11</text>
<rect x="982.5" y="132.5" width="26" height="12" fill="#ff0000" stroke="#d8d8d8" stroke-width="1"/>
<text x="1022.4" y="223.9" font-size="12.3" fill="#ffff00" text-anchor="middle" textLength="11.8" lengthAdjust="spacingAndGlyphs">12</text>
<rect x="1008.5" y="132.5" width="26" height="2" fill="#ff0000" stroke="#d8d8d8" stroke-width="1"/>
<text x="984.4" y="238.6" font-size="12" font-weight="bold" fill="#fff" text-anchor="middle">2Q</text>
<text x="1074.4" y="223.9" font-size="12.3" fill="#ffff00" text-anchor="middle" textLength="11.8" lengthAdjust="spacingAndGlyphs">09</text>
<rect x="1060.5" y="132.5" width="26" height="29" fill="#ff0000" stroke="#d8d8d8" stroke-width="1"/>
<text x="1100.4" y="223.9" font-size="12.3" fill="#ffff00" text-anchor="middle" textLength="11.8" lengthAdjust="spacingAndGlyphs">10</text>
<text x="1126.5" y="223.9" font-size="12.3" fill="#ffff00" text-anchor="middle" textLength="11.8" lengthAdjust="spacingAndGlyphs">11</text>
<rect x="1112.5" y="132.5" width="26" height="12" fill="#ff0000" stroke="#d8d8d8" stroke-width="1"/>
<text x="1152.5" y="223.9" font-size="12.3" fill="#ffff00" text-anchor="middle" textLength="11.8" lengthAdjust="spacingAndGlyphs">12</text>
<text x="1114.5" y="238.6" font-size="12" font-weight="bold" fill="#fff" text-anchor="middle">3Q</text>
<text x="1204.5" y="223.9" font-size="12.3" fill="#ffff00" text-anchor="middle" textLength="11.8" lengthAdjust="spacingAndGlyphs">09</text>
<rect x="1190.5" y="132.5" width="27" height="32" fill="#ff0000" stroke="#d8d8d8" stroke-width="1"/>
<text x="1230.5" y="223.9" font-size="12.3" fill="#ffff00" text-anchor="middle" textLength="11.8" lengthAdjust="spacingAndGlyphs">10</text>
<rect x="1217.5" y="132.5" width="26" height="67" fill="#ff0000" stroke="#d8d8d8" stroke-width="1"/>
<text x="1256.6" y="223.9" font-size="12.3" fill="#ffff00" text-anchor="middle" textLength="11.8" lengthAdjust="spacingAndGlyphs">11</text>
<rect x="1243.5" y="132.5" width="26" height="31" fill="#ff0000" stroke="#d8d8d8" stroke-width="1"/>
<text x="1282.6" y="223.9" font-size="12.3" fill="#ffff00" text-anchor="middle" textLength="11.8" lengthAdjust="spacingAndGlyphs">12</text>
<text x="1244.6" y="238.6" font-size="12" font-weight="bold" fill="#fff" text-anchor="middle">4Q</text>
<rect x="775" y="131" width="540" height="1" fill="#ffff00"/>
<text x="755.9" y="41" font-size="11" font-weight="bold" fill="#ffff00" textLength="40.7" lengthAdjust="spacingAndGlyphs">M Baht</text>
<text x="1272" y="238.6" font-size="11" font-weight="bold" fill="#ffff00" textLength="56" lengthAdjust="spacingAndGlyphs">Quadrant</text>
</svg>
<table class="grid" style="left:722px;top:244px;width:613px"><colgroup><col style="width:102.3px"><col style="width:102.2px"><col style="width:102.2px"><col style="width:102.0px"><col style="width:102.0px"><col style="width:102.3px"></colgroup>
<tr class="hd"><th>Year</th><th>1Q</th><th>2Q</th><th>3Q</th><th>4Q</th><th>Sum</th></tr>
<tr><th class="yr">2009</th><td class="neg">-64.44</td><td class="neg">-24.09</td><td class="neg">-95.56</td><td class="neg">-107.33</td><td class="neg">-291.41</td></tr>
<tr><th class="yr">2010</th><td class="neg">-16.60</td><td class="neg">-42.53</td><td class="neg">-0.32</td><td class="neg">-211.54</td><td class="neg">-270.99</td></tr>
<tr><th class="yr">2011</th><td class="neg">-33.36</td><td class="neg">-45.83</td><td class="neg">-45.13</td><td class="neg">-102.63</td><td class="neg">-226.94</td></tr>
<tr><th class="yr">2012</th><td class="pos">143.07</td><td class="neg">-8.34</td><td class="neg">-3.86</td><td class="na">N/A</td><td class="pos">130.87</td></tr>
</table>
<div class="b " style="left:722px;top:344px;width:606px;height:20px;background:#000;"></div>
<div class="t " style="left:726.8px;top:346.59px;font-size:11px;line-height:15px;color:#fff;font-weight:bold;letter-spacing:0.047px;">Fiscal</div>
<div class="t " style="left:766.5px;top:346.59px;font-size:11px;line-height:15px;color:#fff;font-weight:bold;letter-spacing:0.559px;">Year</div>
<div class="t " style="left:801.3px;top:346.59px;font-size:11px;line-height:15px;color:#fff;font-weight:bold;letter-spacing:0.240px;">End</div>
<div class="t " style="left:831.8px;top:346.59px;font-size:11px;line-height:15px;color:#fff;font-weight:bold;">:</div>
<div class="t " style="left:843.5px;top:346.59px;font-size:11px;line-height:15px;color:#fff;font-weight:bold;letter-spacing:1.188px;">31/12</div>
<div class="b " style="left:891px;top:348px;width:12px;height:12px;background:#b8b8b8;border:1px solid #e8e8e8;box-sizing:border-box;box-shadow:inset 0 0 0 1px #8a8a8a;"></div>
<div class="t " style="left:910.7px;top:346.59px;font-size:11px;line-height:15px;color:#fff;font-weight:bold;letter-spacing:0.460px;">Show Fiscal Year End</div>
<div class="b " style="left:722px;top:363px;width:606px;height:4px;background:#c9d3e3;"></div>
<div class="b " style="left:722px;top:367px;width:606px;height:1px;background:#ffffff;"></div>
<div class="b " style="left:722px;top:368px;width:606px;height:12px;background:#c4cee0;"></div>
<div class="b " style="left:722px;top:380px;width:606px;height:1px;background:#3a3a48;"></div>
<div class="t " style="left:723.0px;top:364.49px;font-size:11px;line-height:15px;color:#101020;font-weight:bold;letter-spacing:0.427px;">[Link1] News</div>
<div class="t " style="left:1035.0px;top:365.09px;font-size:11px;line-height:15px;color:#ffff00;font-weight:bold;letter-spacing:0.411px;">Previous 12 Month(s)</div>
<div class="b " style="left:1210px;top:368px;width:63px;height:11px;background:#191970;"></div>
<div class="t " style="left:1226.4px;top:365.29px;font-size:11px;line-height:15px;color:#fff;font-weight:bold;letter-spacing:0.506px;">Reset</div>
<div class="b " style="left:1274px;top:367px;width:45px;height:13px;background:#e0e0e0;"></div>
<div class="b " style="left:1276px;top:368px;width:42px;height:11px;background:#008080;"></div>
<div class="t " style="left:1284.8px;top:365.49px;font-size:11px;line-height:15px;color:#fff;font-weight:bold;letter-spacing:0.260px;">OUT</div>
<div class="b " style="left:1320px;top:367px;width:8px;height:13px;background:#000;"></div>
<div class="t " style="left:1322.0px;top:365.69px;font-size:11px;line-height:15px;color:#fff;font-weight:bold;">X</div>
<div class="b " style="left:722px;top:381px;width:606px;height:22px;background:#000;"></div>
<div class="b " style="left:722px;top:381px;width:67px;height:23px;background:#fff;"></div>
<div class="t " style="left:728.9px;top:383.84px;font-size:12px;line-height:16px;color:#000;letter-spacing:0.086px;">News (0)</div>
<div class="b " style="left:789px;top:384px;width:66px;height:19px;background:#e4e4e4;border:1px solid #9a9a9a;border-bottom:none;box-sizing:border-box;"></div>
<div class="t " style="left:793.5px;top:385.44px;font-size:12px;line-height:16px;color:#000;letter-spacing:-0.164px;">RSSFeeds</div>
<div class="b " style="left:722px;top:403px;width:606px;height:39px;background:#f1f1f1;"></div>
<div class="b " style="left:722px;top:403px;width:3px;height:169px;background:#e8e8e8;"></div>
<div class="b " style="left:725px;top:405px;width:8px;height:1px;background:#dcdcdc;"></div>
<div class="b " style="left:796px;top:412px;width:330px;height:1px;background:#d8d8d8;"></div>
<div class="b " style="left:796px;top:413px;width:330px;height:1px;background:#fcfcfc;"></div>
<div class="b " style="left:1125px;top:412px;width:1px;height:28px;background:#d4d4d4;"></div>
<div class="b " style="left:1126px;top:412px;width:1px;height:28px;background:#fcfcfc;"></div>
<div class="b " style="left:725px;top:439px;width:401px;height:1px;background:#d4d4d4;"></div>
<div class="b " style="left:725px;top:440px;width:402px;height:1px;background:#fcfcfc;"></div>
<div class="b" style="left:725px;top:403px;width:120px;height:14.5px;overflow:hidden">
<div class="t" style="left:8.4px;top:1.7px;font-size:11px;line-height:15px;font-weight:bold;color:#000;background:#f1f1f1;padding:0 3px 0 3px;margin-left:-3px;letter-spacing:0.819px">Page : 1/1</div></div>
<div class="b " style="left:724px;top:417px;width:99px;height:19px;background:#fff;border:1px solid #e2e2e2;box-sizing:border-box;"></div>
<div class="t " style="left:727.6px;top:419.39px;font-size:11px;line-height:15px;color:#000;font-weight:bold;letter-spacing:0.202px;">BTC</div>
<div class="b " style="left:827px;top:417px;width:135px;height:19px;background:#fff;border:1px solid #e2e2e2;box-sizing:border-box;"></div>
<div class="t " style="left:830.6px;top:419.39px;font-size:11px;line-height:15px;color:#000;font-weight:bold;letter-spacing:0.062px;">Keyword</div>
<button class="b " style="left:970px;top:417px;width:53px;height:19px;border:1px solid #6a5a6a;border-radius:3px;box-sizing:border-box;padding:0;font-family:inherit;background:linear-gradient(#f4f4f4 0%,#ececec 48%,#dedede 52%,#d2d2d2 100%);"></button>
<div class="t " style="left:976.7px;top:419.39px;font-size:11px;line-height:15px;color:#000;font-weight:bold;letter-spacing:0.547px;">Search</div>
<button class="b " style="left:1031px;top:417px;width:28px;height:19px;border:1px solid #6a5a6a;border-radius:3px;box-sizing:border-box;padding:0;font-family:inherit;background:linear-gradient(#f4f4f4 0%,#ececec 48%,#dedede 52%,#d2d2d2 100%);"></button>
<svg class="b" style="left:1035px;top:420px" width="20" height="12" viewBox="0 0 20 12" shape-rendering="crispEdges"><rect width="11" height="12" fill="#fff"/><rect width="11" height="2" fill="#ff0000"/><rect y="10" width="11" height="2" fill="#ff0000"/><rect y="4" width="11" height="4" fill="#3030ff"/><rect x="11" width="9" height="12" fill="#10106a"/><g shape-rendering="auto"><path d="M11 0 L20 12 M20 0 L11 12" stroke="#fff" stroke-width="1.8"/><path d="M11 0 L20 12 M20 0 L11 12" stroke="#ff3030" stroke-width="0.7"/></g><rect x="11" y="4" width="9" height="4" fill="#f4c0c8"/><rect x="15" width="2" height="12" fill="#e8d0e0"/><rect x="11" y="5" width="9" height="2" fill="#f02848"/><rect x="15.5" width="1" height="12" fill="#e04060"/></svg>
<button class="b " style="left:1066px;top:417px;width:53px;height:19px;border:1px solid #6a5a6a;border-radius:3px;box-sizing:border-box;padding:0;font-family:inherit;background:linear-gradient(#f4f4f4 0%,#ececec 48%,#dedede 52%,#d2d2d2 100%);"></button>
<div class="t " style="left:1073.0px;top:419.39px;font-size:11px;line-height:15px;color:#000;font-weight:bold;letter-spacing:0.177px;">Option</div>
<button class="b " style="left:1132px;top:417px;width:32px;height:19px;border:1px solid #b8b8b8;border-radius:3px;box-sizing:border-box;background:#fbfbfb;padding:0;"></button>
<div class="b " style="left:1135px;top:420px;width:26px;height:13px;background:#808080;"></div>
<div class="t " style="left:1048.0px;width:200px;text-align:center;top:419.44px;font-size:12px;line-height:16px;color:#3c3c3c;">&lt;&lt;</div>
<button class="b " style="left:1173px;top:417px;width:32px;height:19px;border:1px solid #b8b8b8;border-radius:3px;box-sizing:border-box;background:#fbfbfb;padding:0;"></button>
<div class="b " style="left:1176px;top:420px;width:26px;height:13px;background:#808080;"></div>
<div class="t " style="left:1089.0px;width:200px;text-align:center;top:419.44px;font-size:12px;line-height:16px;color:#3c3c3c;">&lt;</div>
<button class="b " style="left:1214px;top:417px;width:32px;height:19px;border:1px solid #b8b8b8;border-radius:3px;box-sizing:border-box;background:#fbfbfb;padding:0;"></button>
<div class="b " style="left:1217px;top:420px;width:26px;height:13px;background:#808080;"></div>
<div class="t " style="left:1130.0px;width:200px;text-align:center;top:419.44px;font-size:12px;line-height:16px;color:#3c3c3c;">&gt;</div>
<button class="b " style="left:1255px;top:417px;width:32px;height:19px;border:1px solid #b8b8b8;border-radius:3px;box-sizing:border-box;background:#fbfbfb;padding:0;"></button>
<div class="b " style="left:1258px;top:420px;width:26px;height:13px;background:#808080;"></div>
<div class="t " style="left:1171.0px;width:200px;text-align:center;top:419.44px;font-size:12px;line-height:16px;color:#3c3c3c;">&gt;&gt;</div>
<div class="b " style="left:725px;top:442px;width:586px;height:130px;background:#000;"></div>
<div class="t " style="left:752.0px;top:444.80px;font-size:13px;line-height:17px;color:#ffc648;letter-spacing:-0.220px;">28/02/13 19:07</div>
<div class="t " style="left:842.6px;top:444.80px;font-size:13px;line-height:17px;color:#ffc648;letter-spacing:-0.094px;">SET</div>
<div class="t " style="left:875.7px;top:444.80px;font-size:13px;line-height:17px;color:#ffc648;">[</div>
<div class="t " style="left:881.5px;top:444.80px;font-size:13px;line-height:17px;color:#ffc648;letter-spacing:0.167px;">BTC</div>
<div class="t " style="left:911.8px;top:444.80px;font-size:13px;line-height:17px;color:#ffc648;">]</div>
<div class="t " style="left:922.4px;top:444.80px;font-size:13px;line-height:17px;color:#ffc648;letter-spacing:0.061px;">Determining day for 2013 AGM and declaration of non-payme...</div>
<div class="t " style="left:752.0px;top:464.73px;font-size:13px;line-height:17px;color:#ffc648;letter-spacing:-0.220px;">28/02/13 19:07</div>
<div class="t " style="left:842.6px;top:464.73px;font-size:13px;line-height:17px;color:#ffc648;letter-spacing:-0.094px;">SET</div>
<div class="t " style="left:875.7px;top:464.73px;font-size:13px;line-height:17px;color:#ffc648;">[</div>
<div class="t " style="left:881.5px;top:464.73px;font-size:13px;line-height:17px;color:#ffc648;letter-spacing:0.167px;">BTC</div>
<div class="t " style="left:911.8px;top:464.73px;font-size:13px;line-height:17px;color:#ffc648;">]</div>
<svg class="b" style="left:920px;top:462.73px;overflow:hidden" width="390" height="21" viewBox="0 0 390 21" font-size="13" fill="#ffc648" font-family="'Liberation Sans','Loma','Noto Sans Thai','Tahoma',sans-serif"><text x="2.2" y="15" textLength="177.3" lengthAdjust="spacingAndGlyphs">กำหนดวันประชุมสามัญผู้ถือหุ้นประจำปี</text><text x="183.5" y="15" textLength="27.5" lengthAdjust="spacingAndGlyphs">2556</text><text x="215.4" y="15" textLength="106.6" lengthAdjust="spacingAndGlyphs">และการงดจ่ายเงินปันผล</text></svg>
<div class="t " style="left:752.0px;top:484.66px;font-size:13px;line-height:17px;color:#ffc648;letter-spacing:-0.220px;">28/02/13 17:48</div>
<div class="t " style="left:842.6px;top:484.66px;font-size:13px;line-height:17px;color:#ffc648;letter-spacing:-0.094px;">SET</div>
<div class="t " style="left:875.7px;top:484.66px;font-size:13px;line-height:17px;color:#ffc648;">[</div>
<div class="t " style="left:881.5px;top:484.66px;font-size:13px;line-height:17px;color:#ffc648;letter-spacing:0.167px;">BTC</div>
<div class="t " style="left:911.8px;top:484.66px;font-size:13px;line-height:17px;color:#ffc648;">]</div>
<svg class="b" style="left:920px;top:482.66px;overflow:hidden" width="390" height="21" viewBox="0 0 390 21" font-size="13" fill="#ffc648" font-family="'Liberation Sans','Loma','Noto Sans Thai','Tahoma',sans-serif"><text x="2.2" y="15" textLength="162.4" lengthAdjust="spacingAndGlyphs">การเปลี่ยนแปลงโครงสร้างการถือหุ้น</text><text x="169.0" y="15" textLength="52.7" lengthAdjust="spacingAndGlyphs">(ฉบับแก้ไข)</text></svg>
<div class="t " style="left:752.0px;top:504.59px;font-size:13px;line-height:17px;color:#ffc648;letter-spacing:-0.220px;">28/02/13 17:48</div>
<div class="t " style="left:842.6px;top:504.59px;font-size:13px;line-height:17px;color:#ffc648;letter-spacing:-0.094px;">SET</div>
<div class="t " style="left:875.7px;top:504.59px;font-size:13px;line-height:17px;color:#ffc648;">[</div>
<div class="t " style="left:881.5px;top:504.59px;font-size:13px;line-height:17px;color:#ffc648;letter-spacing:0.167px;">BTC</div>
<div class="t " style="left:911.8px;top:504.59px;font-size:13px;line-height:17px;color:#ffc648;">]</div>
<div class="t " style="left:922.4px;top:504.59px;font-size:13px;line-height:17px;color:#ffc648;letter-spacing:0.105px;">Change in the Shareholding Structure (Revised Version)</div>
<div class="t " style="left:752.0px;top:524.52px;font-size:13px;line-height:17px;color:#ffc648;letter-spacing:-0.220px;">28/02/13 17:47</div>
<div class="t " style="left:842.6px;top:524.52px;font-size:13px;line-height:17px;color:#ffc648;letter-spacing:-0.094px;">SET</div>
<div class="t " style="left:875.7px;top:524.52px;font-size:13px;line-height:17px;color:#ffc648;">[</div>
<div class="t " style="left:881.5px;top:524.52px;font-size:13px;line-height:17px;color:#ffc648;letter-spacing:0.167px;">BTC</div>
<div class="t " style="left:911.8px;top:524.52px;font-size:13px;line-height:17px;color:#ffc648;">]</div>
<div class="t " style="left:922.4px;top:524.52px;font-size:13px;line-height:17px;color:#ffc648;letter-spacing:0.150px;">Audited Yearly and Consolidated F/S (F45-3)</div>
<div class="t " style="left:752.0px;top:544.45px;font-size:13px;line-height:17px;color:#ffc648;letter-spacing:-0.220px;">28/02/13 17:47</div>
<div class="t " style="left:842.6px;top:544.45px;font-size:13px;line-height:17px;color:#ffc648;letter-spacing:-0.094px;">SET</div>
<div class="t " style="left:875.7px;top:544.45px;font-size:13px;line-height:17px;color:#ffc648;">[</div>
<div class="t " style="left:881.5px;top:544.45px;font-size:13px;line-height:17px;color:#ffc648;letter-spacing:0.167px;">BTC</div>
<div class="t " style="left:911.8px;top:544.45px;font-size:13px;line-height:17px;color:#ffc648;">]</div>
<svg class="b" style="left:920px;top:542.45px;overflow:hidden" width="390" height="21" viewBox="0 0 390 21" font-size="13" fill="#ffc648" font-family="'Liberation Sans','Loma','Noto Sans Thai','Tahoma',sans-serif"><text x="2.2" y="15" textLength="232.8" lengthAdjust="spacingAndGlyphs">สรุปผลการดำเนินงานของบจ.และรวมของบริษัทย่อย</text><text x="239.0" y="15" textLength="37.2" lengthAdjust="spacingAndGlyphs">ประจำปี</text><text x="279.7" y="15" textLength="40.0" lengthAdjust="spacingAndGlyphs">(F45-3)</text></svg>
<div class="t " style="left:752.0px;top:564.38px;font-size:13px;line-height:17px;color:#ffc648;letter-spacing:-0.220px;">28/02/13 17:46</div>
<div class="t " style="left:842.6px;top:564.38px;font-size:13px;line-height:17px;color:#ffc648;letter-spacing:-0.094px;">SET</div>
<div class="t " style="left:875.7px;top:564.38px;font-size:13px;line-height:17px;color:#ffc648;">[</div>
<div class="t " style="left:881.5px;top:564.38px;font-size:13px;line-height:17px;color:#ffc648;letter-spacing:0.167px;">BTC</div>
<div class="t " style="left:911.8px;top:564.38px;font-size:13px;line-height:17px;color:#ffc648;">]</div>
<div class="t " style="left:922.4px;top:564.38px;font-size:13px;line-height:17px;color:#ffc648;letter-spacing:-0.065px;">The change of net profit (loss) over 20% % comparing for the y...</div>
<div class="b " style="left:1311px;top:442px;width:17px;height:130px;background:#f0f0f0;"></div>
<svg class="b" style="left:1311px;top:442px" width="17" height="130" viewBox="0 0 17 130"><path d="M5 11.5 L8.5 7.5 L12 11.5 Z" fill="#5a5a5a"/><path d="M5 120 L12 120 L8.5 124 Z" fill="#5a5a5a"/><rect x="2.5" y="18.5" width="13" height="25" rx="2" fill="#e9e9e9" stroke="#989898"/><path d="M5 27.5 H13 M5 30.5 H13 M5 33.5 H13" stroke="#707070" stroke-width="1"/></svg>
</div>
</body>
</html>
